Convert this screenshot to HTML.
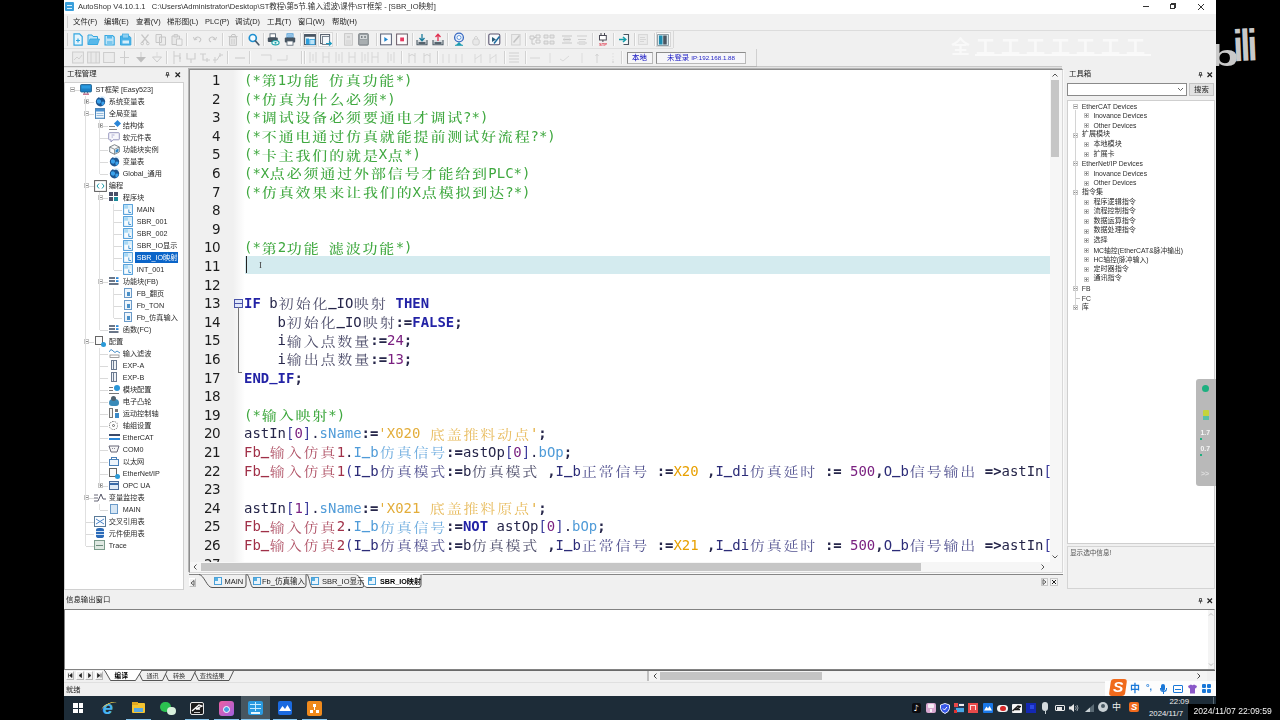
<!DOCTYPE html><html lang="zh-CN"><head><meta charset="utf-8"><title>AutoShop</title><style>
*{box-sizing:border-box;margin:0;padding:0}
html,body{width:1280px;height:720px;overflow:hidden;background:#000}
body{position:relative;font-family:"Liberation Sans","Noto Sans CJK SC",sans-serif;font-size:7.5px;color:#222}
.a{position:absolute}
.t{position:absolute;white-space:nowrap;line-height:1}
#app{filter:blur(.35px);position:absolute;left:64px;top:0;width:1152px;height:696px;background:#f0f0f0;overflow:hidden}
#title{left:0;top:0;width:1152px;height:14px;background:#fff}
#menu{left:0;top:14px;width:1152px;height:16px;background:#f2f2f2}
.ln{position:absolute;left:0;width:30px;text-align:right;font-family:"DejaVu Sans","Liberation Sans",sans-serif;font-size:13.5px;line-height:18.6px;height:18.6px;color:#1c1c1c;letter-spacing:-0.6px}
.cl{position:absolute;left:54px;white-space:pre;font-family:"DejaVu Sans Mono","Liberation Mono",monospace;font-size:13.95px;line-height:18.6px;height:18.6px;color:#26264a}
.cl i{display:inline-block;vertical-align:top;font-style:normal;font-family:"Noto Serif CJK SC",serif;font-size:13px;letter-spacing:1.66px;font-weight:400;transform:scaleX(1.15);transform-origin:0 50%;text-indent:.7px;opacity:.82;position:relative;top:.2px;height:18.6px;line-height:18.6px;overflow:visible}
.cm i{opacity:1;font-weight:500}
.cl b{font-weight:bold;position:relative;top:-2px}
.cm{color:#3fa83f}
.kw{color:#2323a6;font-weight:bold}
.nu{color:#7a2080}
.st{color:#e3ad3a}
.fb{color:#a03048}
.mb{color:#4f9bd8}
.pa{color:#2c2c78}
.br{color:#3c3c9c}
.op{color:#26264a;font-weight:bold}
.xx{color:#e8a000}
.tr{position:absolute;white-space:nowrap;font-size:7.2px;line-height:12px;height:12px;color:#2a2a2a}
</style></head><body><div id="app"><div id="title" class="a"></div><div class="a" style="left:1px;top:2px;width:9px;height:9px;background:#3aa0dc;border-radius:1px"></div><div class="a" style="left:3px;top:5px;width:5px;height:1px;background:#d8f0ff"></div><div class="a" style="left:3px;top:8px;width:5px;height:1px;background:#d8f0ff"></div><div class="t" style="left:14px;top:3px;font-size:7.55px;color:#303030">AutoShop V4.10.1.1&nbsp;&nbsp; C:\Users\Administrator\Desktop\ST教程\第5节.输入滤波\课件\ST框架 - [SBR_IO映射]</div><div class="a" style="left:1079px;top:6px;width:6px;height:1px;background:#333"></div><div class="a" style="left:1106px;top:4px;width:5px;height:5px;border:1px solid #333"></div><div class="a" style="left:1107px;top:3px;width:5px;height:1px;background:#333"></div><div class="a" style="left:1111px;top:3px;width:1px;height:5px;background:#333"></div><svg class="a" style="left:1133px;top:3px" width="8" height="8"><path d="M1 1L7 7M7 1L1 7" stroke="#333" stroke-width="1"/></svg><div id="menu" class="a"></div><div class="t" style="left:9px;top:18px;font-size:7.4px;color:#1e1e1e">文件(F)</div><div class="t" style="left:40px;top:18px;font-size:7.4px;color:#1e1e1e">编辑(E)</div><div class="t" style="left:72px;top:18px;font-size:7.4px;color:#1e1e1e">查看(V)</div><div class="t" style="left:103px;top:18px;font-size:7.4px;color:#1e1e1e">梯形图(L)</div><div class="t" style="left:141px;top:18px;font-size:7.4px;color:#1e1e1e">PLC(P)</div><div class="t" style="left:171px;top:18px;font-size:7.4px;color:#1e1e1e">调试(D)</div><div class="t" style="left:203px;top:18px;font-size:7.4px;color:#1e1e1e">工具(T)</div><div class="t" style="left:234px;top:18px;font-size:7.4px;color:#1e1e1e">窗口(W)</div><div class="t" style="left:268px;top:18px;font-size:7.4px;color:#1e1e1e">帮助(H)</div><div class="a" style="left:3px;top:16px;width:1px;height:12px;background:#cfcfcf"></div><div class="a" style="left:0;top:30px;width:1152px;height:1px;background:#dcdcdc"></div><div class="a" style="left:0;top:48px;width:609px;height:1px;background:#dedede"></div><div class="a" style="left:0;top:66px;width:998px;height:1px;background:#c8c8c8"></div><div class="a" style="left:0;top:67px;width:998px;height:1px;background:#e2e2e2"></div><div class="a" style="left:3px;top:33px;width:1px;height:13px;background:#cfcfcf"></div><svg class="a" style="left:9.0px;top:33.0px" width="10" height="13" viewBox="0 0 10 13"><path d="M1 .8H6.500L9.200 3.500V12.200H1Z" fill="#e6f5fd" stroke="#35a7e0" stroke-width="1.200"/><path d="M3 7.500H7M5 5.500V9.500" stroke="#35a7e0" stroke-width="1.200"/></svg><svg class="a" style="left:23.0px;top:33.0px" width="13" height="13" viewBox="0 0 13 13"><path d="M1 2H5L6 3.500H10.500V11.500H1Z" fill="#bfe4f7" stroke="#35a7e0" stroke-width="1"/><path d="M1 11.500L3 6H12.500L10.500 11.500Z" fill="#58b8ea" stroke="#35a7e0" stroke-width=".8"/></svg><svg class="a" style="left:40.0px;top:33.0px" width="11" height="13" viewBox="0 0 11 13"><path d="M1 2.500H8.500L10.200 4V12H1Z" fill="#bfe4f7" stroke="#35a7e0" stroke-width="1.100"/><rect x="3" y="2.500" width="5" height="3" fill="#58b8ea"/><rect x="3" y="8" width="5.500" height="4" fill="#7cc8ee"/></svg><svg class="a" style="left:55.0px;top:33.0px" width="13" height="13" viewBox="0 0 13 13"><path d="M1.500 3H10L11.800 4.500V12H1.500Z" fill="#4cb2e8" stroke="#35a7e0" stroke-width="1"/><rect x="3.500" y="1" width="6" height="4" fill="#8fd0f2" stroke="#35a7e0" stroke-width=".7"/><rect x="3.500" y="7.500" width="6.500" height="3" fill="#d6effb"/></svg><div class="a" style="left:70.0px;top:33px;width:1px;height:13px;background:#d2d2d2"></div><div class="a" style="left:71.0px;top:33px;width:1px;height:13px;background:#fafafa"></div><svg class="a" style="left:76.0px;top:33.0px" width="10" height="13" viewBox="0 0 10 13"><path d="M1.500 1.500L8 9.500M8.500 1.500L2 9.500" stroke="#c6c6c6" stroke-width="1.200" fill="none"/><circle cx="2.200" cy="10.500" r="1.300" fill="none" stroke="#c6c6c6"/><circle cx="7.800" cy="10.500" r="1.300" fill="none" stroke="#c6c6c6"/></svg><svg class="a" style="left:91.0px;top:33.0px" width="12" height="13" viewBox="0 0 12 13"><path d="M1 1.500H6.500V9.500H1Z M4.500 4H10.500V12H4.500Z" fill="#ececec" stroke="#c6c6c6" stroke-width="1"/></svg><svg class="a" style="left:106.5px;top:33.0px" width="12" height="13" viewBox="0 0 12 13"><path d="M1 3H8.500V11.500H1Z" fill="#e8e8e8" stroke="#c6c6c6"/><path d="M3 1.500H6.500V4H3Z" fill="#ddd" stroke="#c6c6c6" stroke-width=".8"/><path d="M5.500 6H11V12.300H5.500Z" fill="#f2f2f2" stroke="#c6c6c6" stroke-width=".9"/></svg><div class="a" style="left:121.5px;top:33px;width:1px;height:13px;background:#d2d2d2"></div><div class="a" style="left:122.5px;top:33px;width:1px;height:13px;background:#fafafa"></div><svg class="a" style="left:129.0px;top:35.0px" width="9" height="8" viewBox="0 0 9 8"><path d="M1.500 4.500Q4.500 0 7.500 3.500Q8.500 6 6 7" fill="none" stroke="#c6c6c6" stroke-width="1.100"/><path d="M.5 2L1.500 5L4.200 4" fill="none" stroke="#c6c6c6" stroke-width="1"/></svg><svg class="a" style="left:144.0px;top:35.0px" width="9" height="8" viewBox="0 0 9 8"><path d="M7.500 4.500Q4.500 0 1.500 3.500Q.5 6 3 7" fill="none" stroke="#c6c6c6" stroke-width="1.100"/><path d="M8.500 2L7.500 5L4.800 4" fill="none" stroke="#c6c6c6" stroke-width="1"/></svg><div class="a" style="left:158.0px;top:33px;width:1px;height:13px;background:#d2d2d2"></div><div class="a" style="left:159.0px;top:33px;width:1px;height:13px;background:#fafafa"></div><svg class="a" style="left:164.0px;top:33.0px" width="10" height="13" viewBox="0 0 10 13"><path d="M1.500 4H8.500V12.300H1.500Z" fill="#e6e6e6" stroke="#c6c6c6"/><path d="M.5 3.500H9.500M3 3.500L4 1.500H7L7.500 3.500" stroke="#c6c6c6" fill="none"/><path d="M3.800 6V11M6.200 6V11" stroke="#c6c6c6" stroke-width=".8"/></svg><div class="a" style="left:178.0px;top:33px;width:1px;height:13px;background:#d2d2d2"></div><div class="a" style="left:179.0px;top:33px;width:1px;height:13px;background:#fafafa"></div><svg class="a" style="left:184.0px;top:33.0px" width="12" height="13" viewBox="0 0 12 13"><circle cx="4.800" cy="5" r="3.500" fill="#f4fbff" stroke="#1f8fd0" stroke-width="1.700"/><path d="M7.500 8L10.800 11.800" stroke="#46586a" stroke-width="1.700" stroke-linecap="round"/></svg><div class="a" style="left:199.0px;top:33px;width:1px;height:13px;background:#d2d2d2"></div><div class="a" style="left:200.0px;top:33px;width:1px;height:13px;background:#fafafa"></div><svg class="a" style="left:203.0px;top:33.0px" width="13" height="13" viewBox="0 0 13 13"><rect x="3" y=".8" width="5.500" height="4" fill="#fff" stroke="#596673" stroke-width=".9"/><rect x=".8" y="4.500" width="10" height="4.500" rx="1" fill="#46535f"/><ellipse cx="8.500" cy="9.700" rx="3.600" ry="2.200" fill="#eafaf8" stroke="#1ca0a8" stroke-width="1.100"/><circle cx="8.500" cy="9.700" r="1" fill="#1ca0a8"/></svg><svg class="a" style="left:219.5px;top:33.0px" width="12" height="13" viewBox="0 0 12 13"><rect x="3" y=".8" width="6" height="4" fill="#dbeffb" stroke="#3a90d0" stroke-width=".9"/><path d="M5 1.500V4M7 1.500V4" stroke="#2a80c8" stroke-width=".9"/><rect x=".8" y="4.500" width="10.400" height="5" rx="1" fill="#46535f"/><rect x="3" y="8" width="6" height="4.200" fill="#fff" stroke="#596673" stroke-width=".8"/></svg><div class="a" style="left:235.5px;top:33px;width:1px;height:13px;background:#d2d2d2"></div><div class="a" style="left:236.5px;top:33px;width:1px;height:13px;background:#fafafa"></div><div class="a" style="left:238.500px;top:32px;width:14px;height:15px;background:#fafafa;border:1px solid #dadada"></div><svg class="a" style="left:240.0px;top:34.0px" width="12" height="12" viewBox="0 0 12 12"><rect x=".6" y=".6" width="10.800" height="10" fill="#eef7fc" stroke="#4a5663" stroke-width="1.100"/><rect x=".6" y=".6" width="10.800" height="2.200" fill="#4a5663"/><rect x="2" y="4.500" width="3" height="6" fill="#2f9fdc"/><rect x="5.800" y="5.500" width="5" height="5" fill="#bfe4f7" stroke="#2f9fdc" stroke-width=".8"/></svg><div class="a" style="left:254px;top:32px;width:15px;height:15px;background:#fafafa;border:1px solid #dadada"></div><svg class="a" style="left:255.5px;top:34.0px" width="12" height="12" viewBox="0 0 12 12"><rect x=".6" y=".6" width="9" height="9" fill="#fff" stroke="#4a5663" stroke-width="1"/><rect x="2.500" y="2.500" width="7" height="8" fill="#f4f8fb" stroke="#6a7885" stroke-width=".9"/><path d="M6 9.500H11M9 7.500L11.300 9.500L9 11.500" stroke="#1c9cc0" stroke-width="1.200" fill="none"/></svg><div class="a" style="left:272.0px;top:33px;width:1px;height:13px;background:#d2d2d2"></div><div class="a" style="left:273.0px;top:33px;width:1px;height:13px;background:#fafafa"></div><svg class="a" style="left:280.0px;top:33.0px" width="9" height="13" viewBox="0 0 9 13"><rect x=".6" y=".6" width="7.800" height="11.600" fill="#e4e4e4" stroke="#c6c6c6" stroke-width=".9"/><path d="M2 8H7M2 10H7" stroke="#cfcfcf" stroke-width=".8"/><rect x="3" y="3" width="3" height="2" fill="#d0d0d0"/></svg><svg class="a" style="left:294.0px;top:33.0px" width="11" height="13" viewBox="0 0 11 13"><rect x=".6" y=".6" width="9.800" height="11.600" rx="1" fill="#9aa0a4" stroke="#80868a" stroke-width=".9"/><rect x="2" y="2" width="7" height="4" fill="#d4d8da"/><rect x="3" y="3" width="1.500" height="2" fill="#7a8084"/><rect x="6.300" y="3" width="1.500" height="2" fill="#7a8084"/><path d="M1.500 8H9.500M1.500 10H9.500" stroke="#c4c8ca" stroke-width=".7"/></svg><div class="a" style="left:311.5px;top:33px;width:1px;height:13px;background:#d2d2d2"></div><div class="a" style="left:312.5px;top:33px;width:1px;height:13px;background:#fafafa"></div><svg class="a" style="left:316.0px;top:33.0px" width="12" height="13" viewBox="0 0 12 13"><rect x=".6" y="1" width="10.800" height="10.800" fill="#fcfcfe" stroke="#565e74" stroke-width="1"/><path d="M4.300 4L8 6.400L4.300 8.800Z" fill="#1e86d0"/></svg><svg class="a" style="left:331.5px;top:33.0px" width="12" height="13" viewBox="0 0 12 13"><rect x=".6" y="1" width="10.800" height="10.800" fill="#fdfbfc" stroke="#6a5a66" stroke-width="1"/><rect x="4.200" y="4.500" width="3.800" height="3.800" fill="#e83a60"/></svg><div class="a" style="left:348.0px;top:33px;width:1px;height:13px;background:#d2d2d2"></div><div class="a" style="left:349.0px;top:33px;width:1px;height:13px;background:#fafafa"></div><svg class="a" style="left:352.0px;top:33.0px" width="12" height="13" viewBox="0 0 12 13"><path d="M1 7V11.800H11V7" fill="#d8dde0" stroke="#4c5a64" stroke-width="1.100"/><rect x="2.500" y="9" width="7" height="2" fill="#56646e"/><path d="M6 1V7.500M3.500 5L6 7.800L8.500 5" stroke="#1c7c9c" stroke-width="1.300" fill="none"/></svg><svg class="a" style="left:368.0px;top:33.0px" width="12" height="13" viewBox="0 0 12 13"><path d="M1 7V11.800H11V7" fill="#d8dde0" stroke="#4c5a64" stroke-width="1.100"/><rect x="2.500" y="9" width="7" height="2" fill="#56646e"/><path d="M6 8V1.500M3.500 4L6 1.200L8.500 4" stroke="#e03050" stroke-width="1.300" fill="none"/></svg><div class="a" style="left:383.0px;top:33px;width:1px;height:13px;background:#d2d2d2"></div><div class="a" style="left:384.0px;top:33px;width:1px;height:13px;background:#fafafa"></div><svg class="a" style="left:388.5px;top:32.0px" width="12" height="14" viewBox="0 0 12 14"><circle cx="6" cy="5.500" r="4.400" fill="#e8f0fb" stroke="#3868c0" stroke-width="1.300"/><circle cx="6" cy="5.500" r="2" fill="#fff" stroke="#5890d8" stroke-width=".9"/><path d="M3 13L6 10L9 13Z" fill="#1c9cb0"/><path d="M2 13.300H10" stroke="#1c9cb0" stroke-width="1"/></svg><svg class="a" style="left:408.0px;top:35.0px" width="8" height="11" viewBox="0 0 8 11"><rect x=".8" y="4" width="6.400" height="6" rx="2" fill="#e8e8e8" stroke="#d0d0d0"/><path d="M2.500 4V2.500Q4 0 5.500 2.500V4" fill="none" stroke="#d0d0d0"/></svg><div class="a" style="left:420.5px;top:33px;width:1px;height:13px;background:#d2d2d2"></div><div class="a" style="left:421.5px;top:33px;width:1px;height:13px;background:#fafafa"></div><svg class="a" style="left:424.0px;top:33.0px" width="13" height="13" viewBox="0 0 13 13"><rect x=".8" y="1" width="11" height="10.800" rx="1.500" fill="#f8fafc" stroke="#5a5470" stroke-width="1.100"/><path d="M4 4L8 6.500L4 9Z" fill="#285a78"/><path d="M6 10.500L11.500 3.500" stroke="#1c6ca0" stroke-width="1.500"/></svg><div class="a" style="left:440.5px;top:33px;width:1px;height:13px;background:#d2d2d2"></div><div class="a" style="left:441.5px;top:33px;width:1px;height:13px;background:#fafafa"></div><svg class="a" style="left:446.5px;top:33.0px" width="10" height="13" viewBox="0 0 10 13"><rect x=".6" y="1.500" width="8.500" height="10.500" fill="#ececec" stroke="#d2d2d2"/><path d="M2.500 9.500L8.500 2.500" stroke="#c2c2c2" stroke-width="1.500"/></svg><div class="a" style="left:460.5px;top:33px;width:1px;height:13px;background:#d2d2d2"></div><div class="a" style="left:461.5px;top:33px;width:1px;height:13px;background:#fafafa"></div><svg class="a" style="left:465.0px;top:33.0px" width="12" height="13" viewBox="0 0 12 13"><path d="M1 3H5V6H1ZM7 2H11V5H7ZM7 7H11V10H7ZM3 6V11H6M5 4.500H7" fill="none" stroke="#c6c6c6" stroke-width="1"/></svg><svg class="a" style="left:479.0px;top:33.0px" width="12" height="13" viewBox="0 0 12 13"><path d="M1 2H5V5H1ZM7 2H11V5H7ZM1 8H5V11H1ZM7 8H11V11H7Z" fill="#e6e6e6" stroke="#c6c6c6" stroke-width=".9"/></svg><svg class="a" style="left:497.0px;top:33.0px" width="12" height="13" viewBox="0 0 12 13"><path d="M1 3H11M2 6.500H10M1 10H11" stroke="#c6c6c6" stroke-width="1.200"/><path d="M3 5H9V8H3Z" fill="none" stroke="#d4d4d4" stroke-width=".8"/></svg><svg class="a" style="left:512.0px;top:33.0px" width="12" height="13" viewBox="0 0 12 13"><path d="M1 3H11M2 6.500H10M1 10H11" stroke="#cecece" stroke-width="1.200"/><path d="M3 8.500H9V11.500H3Z" fill="none" stroke="#d8d8d8" stroke-width=".8"/></svg><div class="a" style="left:527.5px;top:33px;width:1px;height:13px;background:#d2d2d2"></div><div class="a" style="left:528.5px;top:33px;width:1px;height:13px;background:#fafafa"></div><svg class="a" style="left:533.0px;top:32.0px" width="12" height="15" viewBox="0 0 12 15"><path d="M4 1V3.500M7.500 1V3.500" stroke="#4a4a55" stroke-width="1"/><rect x="2.500" y="3.500" width="6.800" height="4.500" fill="#fff" stroke="#4a4a55" stroke-width="1"/><path d="M5.900 8V10" stroke="#4a4a55" stroke-width="1"/><text x="6" y="14" font-size="4.200" font-family="Liberation Sans,sans-serif" font-weight="bold" fill="#e03c50" text-anchor="middle">STP</text></svg><div class="a" style="left:548.5px;top:33px;width:1px;height:13px;background:#d2d2d2"></div><div class="a" style="left:549.5px;top:33px;width:1px;height:13px;background:#fafafa"></div><svg class="a" style="left:554.0px;top:33.0px" width="12" height="13" viewBox="0 0 12 13"><path d="M5.500 1.500H10.500V11.500H5.500" fill="#f6f8fa" stroke="#4a5560" stroke-width="1.100"/><path d="M1 6.500H7.500M5 4L7.800 6.500L5 9" stroke="#149ca8" stroke-width="1.500" fill="none"/></svg><div class="a" style="left:569.5px;top:33px;width:1px;height:13px;background:#d2d2d2"></div><div class="a" style="left:570.5px;top:33px;width:1px;height:13px;background:#fafafa"></div><svg class="a" style="left:574.0px;top:34.0px" width="10" height="11" viewBox="0 0 10 11"><rect x=".6" y=".6" width="8.800" height="9.800" fill="#ececec" stroke="#d6d6d6"/><path d="M2 3.500H7M2 5.500H8M2 7.500H6" stroke="#d0d0d0" stroke-width=".8"/></svg><div class="a" style="left:589.5px;top:33px;width:1px;height:13px;background:#d2d2d2"></div><div class="a" style="left:590.5px;top:33px;width:1px;height:13px;background:#fafafa"></div><div class="a" style="left:591.500px;top:32px;width:15px;height:15px;background:#fbfbfb;border:1px solid #d6d6d6"></div><svg class="a" style="left:593.0px;top:33.5px" width="12" height="12" viewBox="0 0 12 12"><rect x=".6" y=".6" width="10.800" height="10.800" fill="#d6e8ee" stroke="#7a8a94" stroke-width=".8"/><rect x="2" y="1.500" width="3.500" height="9" fill="#1c8cb0"/><rect x="6.200" y="1.500" width="3.500" height="9" fill="#4a5560"/></svg><div class="a" style="left:608.500px;top:31px;width:1px;height:17px;background:#d8d8d8"></div><svg class="a" style="left:8.0px;top:51.0px" width="12" height="13" viewBox="0 0 12 13"><rect x=".6" y="1" width="10.800" height="11" fill="#ebebeb" stroke="#cdcdcd"/><path d="M2 9L5 6L7 8L10 4" stroke="#cdcdcd" fill="none" stroke-width=".9"/></svg><svg class="a" style="left:23.0px;top:51.0px" width="13" height="13" viewBox="0 0 13 13"><rect x=".6" y="1" width="11.800" height="11" fill="#e9e9e9" stroke="#cdcdcd"/><path d="M4 1V12M9 1V12" stroke="#cdcdcd" stroke-width=".9"/></svg><svg class="a" style="left:39.0px;top:51.0px" width="12" height="13" viewBox="0 0 12 13"><rect x=".6" y="1.500" width="10.800" height="10" fill="#ececec" stroke="#cdcdcd"/></svg><svg class="a" style="left:55.0px;top:51.0px" width="11" height="13" viewBox="0 0 11 13"><path d="M5.500 0V13M1 6.500H10" stroke="#cdcdcd" stroke-width="1"/></svg><svg class="a" style="left:71.0px;top:51.0px" width="12" height="13" viewBox="0 0 12 13"><path d="M1 6H11L6 11.500Z" fill="#bdbdbd"/><path d="M6 1V6" stroke="#cdcdcd"/></svg><svg class="a" style="left:87.0px;top:51.0px" width="12" height="13" viewBox="0 0 12 13"><path d="M1.500 6H10.500L6 11Z" fill="none" stroke="#cdcdcd" stroke-width="1"/><path d="M6 1V6" stroke="#dcdcdc"/></svg><div class="a" style="left:101.5px;top:51px;width:1px;height:13px;background:#d2d2d2"></div><div class="a" style="left:102.5px;top:51px;width:1px;height:13px;background:#fafafa"></div><svg class="a" style="left:107.0px;top:51.0px" width="13" height="13" viewBox="0 0 13 13"><path d="M3 0V13M9 2V11M3 5H9" stroke="#cdcdcd" stroke-width="1"/><circle cx="9" cy="7" r="1" fill="#cdcdcd"/></svg><svg class="a" style="left:121.0px;top:51.0px" width="13" height="13" viewBox="0 0 13 13"><path d="M2 2V8H10V2M6 8V12" stroke="#cdcdcd" stroke-width="1.100" fill="none"/></svg><svg class="a" style="left:134.0px;top:51.0px" width="13" height="13" viewBox="0 0 13 13"><path d="M2 3H8M5 3V9H12M9 7V11" stroke="#cdcdcd" stroke-width="1.100" fill="none"/></svg><svg class="a" style="left:147.0px;top:51.0px" width="13" height="13" viewBox="0 0 13 13"><path d="M2 9H6L9 4H12M4 6V12M9 2V6" stroke="#cdcdcd" stroke-width="1" fill="none"/></svg><div class="a" style="left:163.0px;top:51px;width:1px;height:13px;background:#d2d2d2"></div><div class="a" style="left:164.0px;top:51px;width:1px;height:13px;background:#fafafa"></div><svg class="a" style="left:170.0px;top:51.0px" width="12" height="13" viewBox="0 0 12 13"><path d="M1 7H11" stroke="#cdcdcd" stroke-width="1.100"/></svg><div class="a" style="left:185.0px;top:51px;width:1px;height:13px;background:#d2d2d2"></div><div class="a" style="left:186.0px;top:51px;width:1px;height:13px;background:#fafafa"></div><svg class="a" style="left:196.0px;top:51.0px" width="13" height="13" viewBox="0 0 13 13"><path d="M1 4H11V9.500" stroke="#d4d4d4" stroke-width="1" fill="none"/></svg><svg class="a" style="left:212.0px;top:51.0px" width="13" height="13" viewBox="0 0 13 13"><path d="M1 9H11V4" stroke="#d4d4d4" stroke-width="1" fill="none"/></svg><div class="a" style="left:236.5px;top:51px;width:1px;height:13px;background:#d2d2d2"></div><div class="a" style="left:237.5px;top:51px;width:1px;height:13px;background:#fafafa"></div><div class="a" style="left:239.5px;top:51px;width:1px;height:13px;background:#d2d2d2"></div><div class="a" style="left:240.5px;top:51px;width:1px;height:13px;background:#fafafa"></div><svg class="a" style="left:244.0px;top:51.0px" width="11" height="13" viewBox="0 0 11 13"><path d="M2 1V12M8 1V12 M5 3V10" stroke="#d6d6d6" stroke-width="1" fill="none"/></svg><svg class="a" style="left:257.0px;top:51.0px" width="11" height="13" viewBox="0 0 11 13"><path d="M2 1V12M8 1V12 M2 6H8" stroke="#d6d6d6" stroke-width="1" fill="none"/></svg><svg class="a" style="left:270.0px;top:51.0px" width="11" height="13" viewBox="0 0 11 13"><path d="M2 1V12M8 1V12 M5 3V10" stroke="#d6d6d6" stroke-width="1" fill="none"/></svg><svg class="a" style="left:283.0px;top:51.0px" width="11" height="13" viewBox="0 0 11 13"><path d="M2 1V12M8 1V12 M2 6H8" stroke="#d6d6d6" stroke-width="1" fill="none"/></svg><svg class="a" style="left:296.0px;top:51.0px" width="11" height="13" viewBox="0 0 11 13"><path d="M2 1V12M8 1V12 M5 3V10" stroke="#d6d6d6" stroke-width="1" fill="none"/></svg><svg class="a" style="left:306.0px;top:51.0px" width="11" height="13" viewBox="0 0 11 13"><path d="M2 1V12M8 1V12 M2 6H8" stroke="#d6d6d6" stroke-width="1" fill="none"/></svg><svg class="a" style="left:322.0px;top:51.0px" width="11" height="13" viewBox="0 0 11 13"><path d="M2 1V12M8 1V12 M5 3V10" stroke="#d6d6d6" stroke-width="1" fill="none"/></svg><div class="a" style="left:337.0px;top:51px;width:1px;height:13px;background:#d2d2d2"></div><div class="a" style="left:338.0px;top:51px;width:1px;height:13px;background:#fafafa"></div><svg class="a" style="left:343.0px;top:51.0px" width="11" height="13" viewBox="0 0 11 13"><path d="M2 2V12M8 2V12M2 5Q5 2 8 5" stroke="#d2d2d2" stroke-width="1" fill="none"/></svg><svg class="a" style="left:358.0px;top:51.0px" width="11" height="13" viewBox="0 0 11 13"><path d="M2 2V12M8 2V12M2 5Q5 2 8 5" stroke="#d2d2d2" stroke-width="1" fill="none"/></svg><div class="a" style="left:372.5px;top:51px;width:1px;height:13px;background:#d2d2d2"></div><div class="a" style="left:373.5px;top:51px;width:1px;height:13px;background:#fafafa"></div><svg class="a" style="left:377.0px;top:51.0px" width="11" height="13" viewBox="0 0 11 13"><path d="M2 3V12M8 3V12" stroke="#dadada" stroke-width="1" fill="none"/></svg><svg class="a" style="left:390.0px;top:51.0px" width="11" height="13" viewBox="0 0 11 13"><path d="M2 3V12M8 3V12" stroke="#dadada" stroke-width="1" fill="none"/></svg><svg class="a" style="left:409.0px;top:51.0px" width="11" height="13" viewBox="0 0 11 13"><path d="M2 3V12M8 3V12 M2 8L8 4" stroke="#dadada" stroke-width="1" fill="none"/></svg><svg class="a" style="left:424.0px;top:51.0px" width="11" height="13" viewBox="0 0 11 13"><path d="M2 3V12M8 3V12 M2 8L8 4" stroke="#dadada" stroke-width="1" fill="none"/></svg><div class="a" style="left:439.5px;top:51px;width:1px;height:13px;background:#d2d2d2"></div><div class="a" style="left:440.5px;top:51px;width:1px;height:13px;background:#fafafa"></div><svg class="a" style="left:444.0px;top:51.0px" width="12" height="13" viewBox="0 0 12 13"><path d="M1 2H11M1 5H11M1 8H11M1 11H11" stroke="#cfcfcf" stroke-width="1.100"/></svg><div class="a" style="left:460.5px;top:51px;width:1px;height:13px;background:#d2d2d2"></div><div class="a" style="left:461.5px;top:51px;width:1px;height:13px;background:#fafafa"></div><svg class="a" style="left:465.0px;top:51.0px" width="12" height="13" viewBox="0 0 12 13"><path d="M1 7H11" stroke="#d6d6d6" stroke-width="1"/></svg><svg class="a" style="left:483.0px;top:51.0px" width="6" height="13" viewBox="0 0 6 13"><path d="M3 2V12" stroke="#dcdcdc" stroke-width="1"/></svg><svg class="a" style="left:495.0px;top:51.0px" width="12" height="13" viewBox="0 0 12 13"><path d="M1 8L4 10L10 5" stroke="#dadada" stroke-width="1" fill="none"/></svg><svg class="a" style="left:515.0px;top:51.0px" width="6" height="13" viewBox="0 0 6 13"><path d="M3 2V12" stroke="#dcdcdc" stroke-width="1"/></svg><svg class="a" style="left:530.0px;top:51.0px" width="6" height="13" viewBox="0 0 6 13"><path d="M3 3V12M1.500 5L3 3L4.500 5" stroke="#d4d4d4" stroke-width="1" fill="none"/></svg><svg class="a" style="left:546.0px;top:51.0px" width="6" height="13" viewBox="0 0 6 13"><path d="M3 2V10" stroke="#dedede" stroke-width="1" stroke-dasharray="1.500 1.500"/><circle cx="3" cy="11" r="1" fill="#d8d8d8"/></svg><div class="a" style="left:556.5px;top:51px;width:1px;height:13px;background:#d2d2d2"></div><div class="a" style="left:557.5px;top:51px;width:1px;height:13px;background:#fafafa"></div><div class="a" style="left:562.500px;top:51.500px;width:26px;height:12px;background:#f6f6f8;border:1px solid #8c8c8c;border-right-color:#b8b8b8;border-bottom-color:#b8b8b8"></div><div class="t" style="left:568px;top:54px;font-size:7.400px;color:#1c1cc4;font-weight:500">本地</div><div class="a" style="left:592px;top:51.500px;width:90px;height:12px;background:#f6f6f8;border:1px solid #8c8c8c;border-right-color:#b8b8b8;border-bottom-color:#b8b8b8"></div><div class="t" style="left:603px;top:54px;font-size:7.400px;color:#1c1cc4">未登录 <span style="font-size:6.200px">IP:192.168.1.88</span></div><div class="a" style="left:692px;top:49px;width:1px;height:17px;background:#d0d0d0"></div><div class="a" style="left:0;top:66px;width:693px;height:1px;background:#b4b4b4"></div><div class="t" style="left:3px;top:70px;font-size:7.4px;color:#222">工程管理</div><svg class="a" style="left:101px;top:72px" width="5" height="6"><path d="M1.500 .5H3.500M1.500 .5V3H3.500V.5M.5 3.200H4.500M2.500 3.200V5.500" stroke="#333" stroke-width=".8" fill="none"/></svg><svg class="a" style="left:110px;top:71px" width="7" height="7"><path d="M1.500 1.500L6 6M6 1.500L1.500 6" stroke="#222" stroke-width="1.200"/></svg><div class="a" style="left:0;top:82px;width:120px;height:508px;background:#fff;border:1px solid #d0d0d0"></div><div class="a" style="left:8px;top:89.5px;width:8px;height:1px;background:#dadada"></div><div class="a" style="left:6px;top:87.0px;width:5px;height:5px;border:1px solid #c4c4c4;background:#fff"></div><div class="a" style="left:7px;top:89.0px;width:3px;height:1px;background:#8a8a8a"></div><svg class="a" style="left:16px;top:84px" width="12" height="11" viewBox="0 0 12 11"><rect x=".5" y=".5" width="11" height="7.500" rx="1" fill="#1c80c4" stroke="#1a5a8a" stroke-width=".8"/><rect x="1.500" y="1.500" width="9" height="3" fill="#2a9ae0"/><path d="M4.500 8V9.500M7.500 8V9.500" stroke="#3a5a7a" stroke-width=".8"/><rect x="3" y="9.500" width="6" height="1.300" fill="#b85a7a"/></svg><div class="tr" style="left:31.5px;top:83.5px;">ST框架 [Easy523]</div><div class="a" style="left:22px;top:101.5px;width:8px;height:1px;background:#dadada"></div><div class="a" style="left:20px;top:99.0px;width:5px;height:5px;border:1px solid #c4c4c4;background:#fff"></div><div class="a" style="left:21px;top:101.0px;width:3px;height:1px;background:#8a8a8a"></div><div class="a" style="left:22px;top:100.0px;width:1px;height:3px;background:#8a8a8a"></div><svg class="a" style="left:31px;top:96px" width="11" height="11" viewBox="0 0 11 11"><circle cx="5.500" cy="5.800" r="4.700" fill="#1d5692"/><path d="M2 4Q4 2.500 5.500 4T5 7.500Q3 8 2 6.500Z" fill="#3aa2ec"/><path d="M6.500 6Q8.500 5 9.500 6.500Q9 9 7 9.500Q6 8 6.500 6Z" fill="#3aa2ec"/><path d="M4.500 1.800Q8 -.5 10.300 2.500" stroke="#dff0fc" stroke-width="1.300" fill="none"/></svg><div class="tr" style="left:44.7px;top:95.5px;">系统变量表</div><div class="a" style="left:22px;top:113.5px;width:8px;height:1px;background:#dadada"></div><div class="a" style="left:20px;top:111.0px;width:5px;height:5px;border:1px solid #c4c4c4;background:#fff"></div><div class="a" style="left:21px;top:113.0px;width:3px;height:1px;background:#8a8a8a"></div><svg class="a" style="left:31px;top:108px" width="10" height="11" viewBox="0 0 10 11"><rect x=".5" y=".5" width="9" height="10" fill="#eef5fb" stroke="#4f86b8"/><rect x="1" y="1" width="8" height="2.500" fill="#4a90d0"/><path d="M1.500 5.500H8.500M1.500 7.500H8.500" stroke="#8ab4d8" stroke-width=".9"/><rect x="1" y="9" width="8" height="1.200" fill="#b8d4ec"/></svg><div class="tr" style="left:44.7px;top:107.5px;">全局变量</div><div class="a" style="left:36px;top:125.5px;width:8px;height:1px;background:#dadada"></div><div class="a" style="left:34px;top:123.0px;width:5px;height:5px;border:1px solid #c4c4c4;background:#fff"></div><div class="a" style="left:35px;top:125.0px;width:3px;height:1px;background:#8a8a8a"></div><div class="a" style="left:36px;top:124.0px;width:1px;height:3px;background:#8a8a8a"></div><div class="a" style="left:51px;top:121px;width:5px;height:5px;background:#2a86d8;transform:rotate(45deg)"></div><div class="a" style="left:45px;top:126px;width:6px;height:1px;background:#888"></div><div class="a" style="left:45px;top:129px;width:8px;height:1px;background:#888"></div><div class="tr" style="left:58.7px;top:119.5px;">结构体</div><div class="a" style="left:36px;top:137.5px;width:8px;height:1px;background:#dadada"></div><svg class="a" style="left:44px;top:132px" width="12" height="11" viewBox="0 0 12 11"><path d="M1.500 .7H10.500Q11.300 .7 11.300 1.500V7Q11.300 7.800 10.500 7.800H5L3 10V7.800H1.500Q.7 7.800 .7 7V1.500Q.7 .7 1.500 .7Z" fill="#f7f7fc" stroke="#8c8cb8" stroke-width=".9"/><path d="M3.500 3H6.500M3.500 5H5" stroke="#9a9ac4" stroke-width=".8"/></svg><div class="tr" style="left:58.7px;top:131.5px;">软元件表</div><div class="a" style="left:36px;top:149.5px;width:8px;height:1px;background:#dadada"></div><svg class="a" style="left:45px;top:144px" width="11" height="11" viewBox="0 0 11 11"><path d="M5.500 .7L10.300 3V8L5.500 10.300L.7 8V3Z" fill="#fafafa" stroke="#70787e" stroke-width=".9"/><path d="M.7 3L5.500 5.300L10.300 3M5.500 5.300V10.300" stroke="#70787e" stroke-width=".8" fill="none"/><path d="M6.500 6L9.500 4.600V7.500L6.500 9Z" fill="#2a86c8"/></svg><div class="tr" style="left:58.7px;top:143.5px;">功能块实例</div><div class="a" style="left:36px;top:161.5px;width:8px;height:1px;background:#dadada"></div><svg class="a" style="left:45px;top:156px" width="11" height="11" viewBox="0 0 11 11"><circle cx="5.500" cy="5.800" r="4.700" fill="#1d5692"/><path d="M2 4Q4 2.500 5.500 4T5 7.500Q3 8 2 6.500Z" fill="#3aa2ec"/><path d="M6.500 6Q8.500 5 9.500 6.500Q9 9 7 9.500Q6 8 6.500 6Z" fill="#3aa2ec"/><path d="M4.500 1.800Q8 -.5 10.300 2.500" stroke="#dff0fc" stroke-width="1.300" fill="none"/></svg><div class="tr" style="left:58.7px;top:155.5px;">变量表</div><div class="a" style="left:36px;top:173.5px;width:8px;height:1px;background:#dadada"></div><svg class="a" style="left:45px;top:168px" width="11" height="11" viewBox="0 0 11 11"><circle cx="5.500" cy="5.800" r="4.700" fill="#1d5692"/><path d="M2 4Q4 2.500 5.500 4T5 7.500Q3 8 2 6.500Z" fill="#3aa2ec"/><path d="M6.500 6Q8.500 5 9.500 6.500Q9 9 7 9.500Q6 8 6.500 6Z" fill="#3aa2ec"/><path d="M4.500 1.800Q8 -.5 10.300 2.500" stroke="#dff0fc" stroke-width="1.300" fill="none"/></svg><div class="tr" style="left:58.7px;top:167.5px;">Global_通用</div><div class="a" style="left:22px;top:185.5px;width:8px;height:1px;background:#dadada"></div><div class="a" style="left:20px;top:183.0px;width:5px;height:5px;border:1px solid #c4c4c4;background:#fff"></div><div class="a" style="left:21px;top:185.0px;width:3px;height:1px;background:#8a8a8a"></div><svg class="a" style="left:30px;top:180px" width="13" height="12" viewBox="0 0 13 12"><rect x=".6" y=".6" width="11.800" height="10.800" fill="#fff" stroke="#5a5a5a" stroke-width="1"/><path d="M5 3.500L3 6L5 8.500M8 3.500L10 6L8 8.500" stroke="#1a9aa8" stroke-width="1" fill="none"/></svg><div class="tr" style="left:44.7px;top:179.5px;">编程</div><div class="a" style="left:36px;top:197.5px;width:8px;height:1px;background:#dadada"></div><div class="a" style="left:34px;top:195.0px;width:5px;height:5px;border:1px solid #c4c4c4;background:#fff"></div><div class="a" style="left:35px;top:197.0px;width:3px;height:1px;background:#8a8a8a"></div><div class="a" style="left:45px;top:192px;width:4px;height:4px;background:#4a5068"></div><div class="a" style="left:50px;top:192px;width:4px;height:4px;background:#4a5068"></div><div class="a" style="left:45px;top:197px;width:4px;height:4px;background:#4a5068"></div><div class="a" style="left:50px;top:197px;width:4px;height:4px;background:#1a8a9a"></div><div class="tr" style="left:58.7px;top:191.5px;">程序块</div><div class="a" style="left:50px;top:209.5px;width:8px;height:1px;background:#dadada"></div><svg class="a" style="left:59px;top:204px" width="10" height="11" viewBox="0 0 10 11"><rect x=".6" y=".6" width="8.800" height="9.800" fill="#f6fbfe" stroke="#4a9ad8" stroke-width="1"/><rect x="1.200" y="1.200" width="3.800" height="3.500" fill="#a8d8f4"/><path d="M5.800 5.500V8.500H8" stroke="#4a9ad8" stroke-width="1" fill="none"/><rect x="5" y="1.200" width="3.800" height="3.500" fill="#d8eefa"/></svg><div class="tr" style="left:72.7px;top:203.5px;">MAIN</div><div class="a" style="left:50px;top:221.5px;width:8px;height:1px;background:#dadada"></div><svg class="a" style="left:59px;top:216px" width="10" height="11" viewBox="0 0 10 11"><rect x=".6" y=".6" width="8.800" height="9.800" fill="#f6fbfe" stroke="#4a9ad8" stroke-width="1"/><rect x="1.200" y="1.200" width="3.800" height="3.500" fill="#a8d8f4"/><path d="M5.800 5.500V8.500H8" stroke="#4a9ad8" stroke-width="1" fill="none"/><rect x="5" y="1.200" width="3.800" height="3.500" fill="#d8eefa"/></svg><div class="tr" style="left:72.7px;top:215.5px;">SBR_001</div><div class="a" style="left:50px;top:233.5px;width:8px;height:1px;background:#dadada"></div><svg class="a" style="left:59px;top:228px" width="10" height="11" viewBox="0 0 10 11"><rect x=".6" y=".6" width="8.800" height="9.800" fill="#f6fbfe" stroke="#4a9ad8" stroke-width="1"/><rect x="1.200" y="1.200" width="3.800" height="3.500" fill="#a8d8f4"/><path d="M5.800 5.500V8.500H8" stroke="#4a9ad8" stroke-width="1" fill="none"/><rect x="5" y="1.200" width="3.800" height="3.500" fill="#d8eefa"/></svg><div class="tr" style="left:72.7px;top:227.5px;">SBR_002</div><div class="a" style="left:50px;top:245.5px;width:8px;height:1px;background:#dadada"></div><svg class="a" style="left:59px;top:240px" width="10" height="11" viewBox="0 0 10 11"><rect x=".6" y=".6" width="8.800" height="9.800" fill="#f6fbfe" stroke="#4a9ad8" stroke-width="1"/><rect x="1.200" y="1.200" width="3.800" height="3.500" fill="#a8d8f4"/><path d="M5.800 5.500V8.500H8" stroke="#4a9ad8" stroke-width="1" fill="none"/><rect x="5" y="1.200" width="3.800" height="3.500" fill="#d8eefa"/></svg><div class="tr" style="left:72.7px;top:239.5px;">SBR_IO显示</div><div class="a" style="left:50px;top:257.5px;width:8px;height:1px;background:#dadada"></div><svg class="a" style="left:59px;top:252px" width="10" height="11" viewBox="0 0 10 11"><rect x=".6" y=".6" width="8.800" height="9.800" fill="#f6fbfe" stroke="#4a9ad8" stroke-width="1"/><rect x="1.200" y="1.200" width="3.800" height="3.500" fill="#a8d8f4"/><path d="M5.800 5.500V8.500H8" stroke="#4a9ad8" stroke-width="1" fill="none"/><rect x="5" y="1.200" width="3.800" height="3.500" fill="#d8eefa"/></svg><div class="a" style="left:71px;top:251.7px;width:43px;height:11.500px;background:#0a64c8"></div><div class="tr" style="left:72.7px;top:251.5px;color:#fff;">SBR_IO映射</div><div class="a" style="left:50px;top:269.5px;width:8px;height:1px;background:#dadada"></div><svg class="a" style="left:59px;top:264px" width="10" height="11" viewBox="0 0 10 11"><rect x=".6" y=".6" width="8.800" height="9.800" fill="#f6fbfe" stroke="#4a9ad8" stroke-width="1"/><rect x="1.200" y="1.200" width="3.800" height="3.500" fill="#a8d8f4"/><path d="M5.800 5.500V8.500H8" stroke="#4a9ad8" stroke-width="1" fill="none"/><rect x="5" y="1.200" width="3.800" height="3.500" fill="#d8eefa"/></svg><div class="tr" style="left:72.7px;top:263.5px;">INT_001</div><div class="a" style="left:36px;top:281.5px;width:8px;height:1px;background:#dadada"></div><div class="a" style="left:34px;top:279.0px;width:5px;height:5px;border:1px solid #c4c4c4;background:#fff"></div><div class="a" style="left:35px;top:281.0px;width:3px;height:1px;background:#8a8a8a"></div><svg class="a" style="left:45px;top:276px" width="10" height="10"><path d="M0 2H6M0 5H6M0 8H9.500" stroke="#3a4a62" stroke-width="1.600"/><rect x="7" y="1.200" width="2.500" height="1.800" fill="#2a86d8"/><rect x="7" y="4.200" width="2.500" height="1.800" fill="#2a86d8"/></svg><div class="tr" style="left:58.7px;top:275.5px;">功能块(FB)</div><div class="a" style="left:50px;top:293.5px;width:8px;height:1px;background:#dadada"></div><div class="a" style="left:60px;top:288px;width:8px;height:10px;border:1px solid #6a9ac8;background:#eef5fb"></div><div class="a" style="left:63px;top:292px;width:3px;height:4px;background:#4a90c8"></div><div class="tr" style="left:72.7px;top:287.5px;">FB_翻页</div><div class="a" style="left:50px;top:305.5px;width:8px;height:1px;background:#dadada"></div><div class="a" style="left:60px;top:300px;width:8px;height:10px;border:1px solid #6a9ac8;background:#eef5fb"></div><div class="a" style="left:63px;top:304px;width:3px;height:4px;background:#4a90c8"></div><div class="tr" style="left:72.7px;top:299.5px;">Fb_TON</div><div class="a" style="left:50px;top:317.5px;width:8px;height:1px;background:#dadada"></div><div class="a" style="left:60px;top:312px;width:8px;height:10px;border:1px solid #6a9ac8;background:#eef5fb"></div><div class="a" style="left:63px;top:316px;width:3px;height:4px;background:#4a90c8"></div><div class="tr" style="left:72.7px;top:311.5px;">Fb_仿真输入</div><div class="a" style="left:36px;top:329.5px;width:8px;height:1px;background:#dadada"></div><svg class="a" style="left:45px;top:324px" width="10" height="10"><path d="M0 2H6M0 5H6M0 8H9.500" stroke="#3a4a62" stroke-width="1.600"/><rect x="7" y="1.200" width="2.500" height="1.800" fill="#2a86d8"/><rect x="7" y="4.200" width="2.500" height="1.800" fill="#2a86d8"/></svg><div class="tr" style="left:58.7px;top:323.5px;">函数(FC)</div><div class="a" style="left:22px;top:341.5px;width:8px;height:1px;background:#dadada"></div><div class="a" style="left:20px;top:339.0px;width:5px;height:5px;border:1px solid #c4c4c4;background:#fff"></div><div class="a" style="left:21px;top:341.0px;width:3px;height:1px;background:#8a8a8a"></div><div class="a" style="left:31px;top:336px;width:8px;height:9px;border:1px solid #666;background:#fafafa"></div><div class="a" style="left:37px;top:342px;width:5px;height:5px;background:#2a9ad8;border-radius:3px"></div><div class="tr" style="left:44.7px;top:335.5px;">配置</div><div class="a" style="left:36px;top:353.5px;width:8px;height:1px;background:#dadada"></div><svg class="a" style="left:45px;top:348px" width="11" height="10"><path d="M0 4 Q2 0 4 3 T8 3 L11 5" stroke="#4a90c8" fill="none" stroke-width="1"/><rect x="1" y="7" width="9" height="2.5" fill="none" stroke="#888" stroke-width=".8"/></svg><div class="tr" style="left:58.7px;top:347.5px;">输入滤波</div><div class="a" style="left:36px;top:365.5px;width:8px;height:1px;background:#dadada"></div><div class="a" style="left:47px;top:360px;width:6px;height:10px;border:1px solid #6a7a90;background:#eef2f6"></div><div class="a" style="left:49px;top:361px;width:1px;height:8px;background:#6a7a90"></div><div class="tr" style="left:58.7px;top:359.5px;">EXP-A</div><div class="a" style="left:36px;top:377.5px;width:8px;height:1px;background:#dadada"></div><div class="a" style="left:47px;top:372px;width:6px;height:10px;border:1px solid #6a7a90;background:#eef2f6"></div><div class="a" style="left:49px;top:373px;width:1px;height:8px;background:#6a7a90"></div><div class="tr" style="left:58.7px;top:371.5px;">EXP-B</div><div class="a" style="left:36px;top:389.5px;width:8px;height:1px;background:#dadada"></div><div class="a" style="left:50px;top:385px;width:6px;height:6px;background:#2a96d8;border-radius:3px"></div><div class="a" style="left:45px;top:393px;width:10px;height:1px;background:#777"></div><div class="a" style="left:45px;top:387px;width:4px;height:1px;background:#777"></div><div class="a" style="left:45px;top:390px;width:4px;height:1px;background:#777"></div><div class="tr" style="left:58.7px;top:383.5px;">模块配置</div><div class="a" style="left:36px;top:401.5px;width:8px;height:1px;background:#dadada"></div><div class="a" style="left:45px;top:399px;width:10px;height:7px;background:#3a8ab8;border-radius:4px 4px 3px 3px"></div><div class="a" style="left:47px;top:396px;width:5px;height:5px;background:#50626e;border-radius:3px"></div><div class="tr" style="left:58.7px;top:395.5px;">电子凸轮</div><div class="a" style="left:36px;top:413.5px;width:8px;height:1px;background:#dadada"></div><div class="a" style="left:45px;top:408px;width:4px;height:10px;border:1px solid #777;background:#f4f4f4"></div><div class="a" style="left:51px;top:413px;width:4px;height:5px;background:#3a8ac8"></div><div class="a" style="left:51px;top:409px;width:3px;height:3px;background:#777"></div><div class="tr" style="left:58.7px;top:407.5px;">运动控制轴</div><div class="a" style="left:36px;top:425.5px;width:8px;height:1px;background:#dadada"></div><div class="a" style="left:45px;top:421px;width:9px;height:9px;border:1.5px dotted #666;border-radius:5px"></div><div class="a" style="left:48px;top:424px;width:3px;height:3px;border:1px solid #666;border-radius:2px"></div><div class="tr" style="left:58.7px;top:419.5px;">轴组设置</div><div class="a" style="left:36px;top:437.5px;width:8px;height:1px;background:#dadada"></div><div class="a" style="left:45px;top:434px;width:11px;height:2px;background:#3a4a6a"></div><div class="a" style="left:45px;top:438px;width:11px;height:2px;background:#2a86d8"></div><div class="tr" style="left:58.7px;top:431.5px;">EtherCAT</div><div class="a" style="left:36px;top:449.5px;width:8px;height:1px;background:#dadada"></div><svg class="a" style="left:44px;top:444px" width="12" height="10"><path d="M1 2H11L9 8H3Z" fill="#f6f6f6" stroke="#667" stroke-width="1"/><path d="M4 4.5H8" stroke="#889" stroke-width="1" stroke-dasharray="1 1"/></svg><div class="tr" style="left:58.7px;top:443.5px;">COM0</div><div class="a" style="left:36px;top:461.5px;width:8px;height:1px;background:#dadada"></div><div class="a" style="left:45px;top:459px;width:10px;height:7px;border:1px solid #4a80b8;background:#eef4fa"></div><div class="a" style="left:47px;top:457px;width:6px;height:3px;border:1px solid #4a80b8;border-bottom:none"></div><div class="tr" style="left:58.7px;top:455.5px;">以太网</div><div class="a" style="left:36px;top:473.5px;width:8px;height:1px;background:#dadada"></div><div class="a" style="left:45px;top:468px;width:8px;height:9px;border:1px solid #666;background:#fafafa"></div><div class="a" style="left:51px;top:474px;width:5px;height:5px;background:#2a9ad8;border-radius:3px"></div><div class="tr" style="left:58.7px;top:467.5px;">EtherNet/IP</div><div class="a" style="left:36px;top:485.5px;width:8px;height:1px;background:#dadada"></div><div class="a" style="left:34px;top:483.0px;width:5px;height:5px;border:1px solid #c4c4c4;background:#fff"></div><div class="a" style="left:35px;top:485.0px;width:3px;height:1px;background:#8a8a8a"></div><div class="a" style="left:36px;top:484.0px;width:1px;height:3px;background:#8a8a8a"></div><div class="a" style="left:45px;top:481px;width:10px;height:9px;border:1px solid #4a6a98;background:#dfeaf6"></div><div class="a" style="left:46px;top:483px;width:8px;height:2px;background:#3a6aa8"></div><div class="tr" style="left:58.7px;top:479.5px;">OPC UA</div><div class="a" style="left:22px;top:497.5px;width:8px;height:1px;background:#dadada"></div><div class="a" style="left:20px;top:495.0px;width:5px;height:5px;border:1px solid #c4c4c4;background:#fff"></div><div class="a" style="left:21px;top:497.0px;width:3px;height:1px;background:#8a8a8a"></div><svg class="a" style="left:30px;top:492px" width="12" height="10"><path d="M0 3H4M0 6H4M0 9H4" stroke="#667" stroke-width="1"/><path d="M4 9L7 2L9 7H12" stroke="#556" fill="none" stroke-width="1"/></svg><div class="tr" style="left:44.7px;top:491.5px;">变量监控表</div><div class="a" style="left:36px;top:509.5px;width:8px;height:1px;background:#dadada"></div><div class="a" style="left:46px;top:504px;width:8px;height:10px;border:1px solid #6a9ac8;background:#d6e6f4"></div><div class="tr" style="left:58.7px;top:503.5px;">MAIN</div><div class="a" style="left:22px;top:521.5px;width:8px;height:1px;background:#dadada"></div><svg class="a" style="left:30px;top:516px" width="12" height="11"><rect x=".5" y=".5" width="11" height="10" fill="#fafcff" stroke="#5a7a98"/><path d="M2 3L10 8M2 8L10 3" stroke="#4a86c8" stroke-width="1"/></svg><div class="tr" style="left:44.7px;top:515.5px;">交叉引用表</div><div class="a" style="left:22px;top:533.5px;width:8px;height:1px;background:#dadada"></div><div class="a" style="left:32px;top:528px;width:8px;height:10px;background:#2a6ab8;border-radius:3px/2px"></div><div class="a" style="left:32px;top:531px;width:8px;height:1px;background:#cfe0f4"></div><div class="a" style="left:32px;top:534px;width:8px;height:1px;background:#cfe0f4"></div><div class="tr" style="left:44.7px;top:527.5px;">元件使用表</div><div class="a" style="left:22px;top:545.5px;width:8px;height:1px;background:#dadada"></div><div class="a" style="left:30px;top:540px;width:11px;height:10px;border:1px solid #7a9a8a;background:#dfe8e2"></div><div class="a" style="left:32px;top:545px;width:7px;height:1px;background:#6a8a7a"></div><div class="tr" style="left:44.7px;top:539.5px;">Trace</div><div class="a" style="left:21px;top:95.5px;width:1px;height:450.0px;background:#e0e0e0"></div><div class="a" style="left:35px;top:119.5px;width:1px;height:54.0px;background:#e0e0e0"></div><div class="a" style="left:35px;top:191.5px;width:1px;height:138.0px;background:#e0e0e0"></div><div class="a" style="left:49px;top:203.5px;width:1px;height:66.0px;background:#e0e0e0"></div><div class="a" style="left:49px;top:287.5px;width:1px;height:30.0px;background:#e0e0e0"></div><div class="a" style="left:35px;top:347.5px;width:1px;height:138.0px;background:#e0e0e0"></div><div class="a" style="left:35px;top:503.5px;width:1px;height:6.0px;background:#e0e0e0"></div><div class="a" style="left:125px;top:69px;width:874px;height:504px;background:#fff;border:1px solid #8c8c8c;border-right-color:#d8d8d8;border-bottom-color:#d8d8d8;overflow:hidden;box-shadow:-1px -1px 0 #b4b4b4,1px 1px 0 #fafafa" id="ed"><div class="a" style="left:0;top:0;width:43px;height:100%;background:#f0f0f0"></div><div class="a" style="left:43px;top:0;width:12px;height:100%;background:linear-gradient(90deg,#f0f0f0,#fff)"></div><div class="a" style="left:55px;top:185.7px;width:805px;height:18px;background:#d4ebef"></div><div class="a" style="left:56px;top:186.2px;width:1px;height:17px;background:#222"></div><div class="t" style="left:69px;top:191.0px;font-size:9px;color:#444;font-family:'Liberation Serif',serif">I</div><div class="ln" style="top:1.0px">1</div><div class="cl" style="top:1.0px"><span class="cm">(*<i style="width:16.86px">第</i>1<i style="width:33.72px">功能</i> <i style="width:67.44px">仿真功能</i>*)</span></div><div class="ln" style="top:19.6px">2</div><div class="cl" style="top:19.6px"><span class="cm">(*<i style="width:118.02px">仿真为什么必须</i>*)</span></div><div class="ln" style="top:38.2px">3</div><div class="cl" style="top:38.2px"><span class="cm">(*<i style="width:202.32px">调试设备必须要通电才调试</i>?*)</span></div><div class="ln" style="top:56.8px">4</div><div class="cl" style="top:56.8px"><span class="cm">(*<i style="width:269.76px">不通电通过仿真就能提前测试好流程</i>?*)</span></div><div class="ln" style="top:75.4px">5</div><div class="cl" style="top:75.4px"><span class="cm">(*<i style="width:118.02px">卡主我们的就是</i>X<i style="width:16.86px">点</i>*)</span></div><div class="ln" style="top:94.0px">6</div><div class="cl" style="top:94.0px"><span class="cm">(*X<i style="width:219.18px">点必须通过外部信号才能给到</i>PLC*)</span></div><div class="ln" style="top:112.6px">7</div><div class="cl" style="top:112.6px"><span class="cm">(*<i style="width:151.74px">仿真效果来让我们的</i>X<i style="width:84.30px">点模拟到达</i>?*)</span></div><div class="ln" style="top:131.2px">8</div><div class="ln" style="top:149.8px">9</div><div class="ln" style="top:168.4px">10</div><div class="cl" style="top:168.4px"><span class="cm">(*<i style="width:16.86px">第</i>2<i style="width:33.72px">功能</i> <i style="width:67.44px">滤波功能</i>*)</span></div><div class="ln" style="top:187.0px">11</div><div class="ln" style="top:205.6px">12</div><div class="ln" style="top:224.2px">13</div><div class="cl" style="top:224.2px"><span class="kw">IF</span> b<i style="width:50.58px">初始化</i><b>_</b>IO<i style="width:33.72px">映射</i> <span class="kw">THEN</span></div><div class="ln" style="top:242.8px">14</div><div class="cl" style="top:242.8px">    b<i style="width:50.58px">初始化</i><b>_</b>IO<i style="width:33.72px">映射</i><span class="op">:=</span><span class="kw">FALSE</span><span class="op">;</span></div><div class="ln" style="top:261.4px">15</div><div class="cl" style="top:261.4px">    i<i style="width:84.30px">输入点数量</i><span class="op">:=</span><span class="nu">24</span><span class="op">;</span></div><div class="ln" style="top:280.0px">16</div><div class="cl" style="top:280.0px">    i<i style="width:84.30px">输出点数量</i><span class="op">:=</span><span class="nu">13</span><span class="op">;</span></div><div class="ln" style="top:298.6px">17</div><div class="cl" style="top:298.6px"><span class="kw">END<b>_</b>IF</span><span class="op">;</span></div><div class="ln" style="top:317.2px">18</div><div class="ln" style="top:335.8px">19</div><div class="cl" style="top:335.8px"><span class="cm">(*<i style="width:67.44px">输入映射</i>*)</span></div><div class="ln" style="top:354.4px">20</div><div class="cl" style="top:354.4px">astIn<span class="br">[</span><span class="nu">0</span><span class="br">]</span>.<span class="mb">sName</span><span class="op">:=</span><span class="st">'X020 <i style="width:101.16px">底盖推料动点</i>'</span><span class="op">;</span></div><div class="ln" style="top:373.0px">21</div><div class="cl" style="top:373.0px"><span class="fb">Fb<b>_</b><i style="width:67.44px">输入仿真</i>1</span>.<span class="mb">I<b>_</b>b<i style="width:67.44px">仿真信号</i></span><span class="op">:=</span>astOp<span class="br">[</span><span class="nu">0</span><span class="br">]</span>.<span class="mb">bOp</span><span class="op">;</span></div><div class="ln" style="top:391.6px">22</div><div class="cl" style="top:391.6px"><span class="fb">Fb<b>_</b><i style="width:67.44px">输入仿真</i>1</span><span class="br">(</span><span class="pa">I<b>_</b>b<i style="width:67.44px">仿真模式</i></span><span class="op">:=</span>b<i style="width:67.44px">仿真模式</i> <span class="op">,</span><span class="pa">I<b>_</b>b<i style="width:67.44px">正常信号</i> </span><span class="op">:=</span><span class="xx">X20</span> <span class="op">,</span><span class="pa">I<b>_</b>di<i style="width:67.44px">仿真延时</i> </span><span class="op">:=</span> <span class="nu">500</span><span class="op">,</span><span class="pa">O<b>_</b>b<i style="width:67.44px">信号输出</i> </span><span class="op">=&gt;</span>astIn<span class="br">[</span><span class="nu">0</span><span class="br">])</span><span class="op">;</span></div><div class="ln" style="top:410.2px">23</div><div class="ln" style="top:428.8px">24</div><div class="cl" style="top:428.8px">astIn<span class="br">[</span><span class="nu">1</span><span class="br">]</span>.<span class="mb">sName</span><span class="op">:=</span><span class="st">'X021 <i style="width:101.16px">底盖推料原点</i>'</span><span class="op">;</span></div><div class="ln" style="top:447.4px">25</div><div class="cl" style="top:447.4px"><span class="fb">Fb<b>_</b><i style="width:67.44px">输入仿真</i>2</span>.<span class="mb">I<b>_</b>b<i style="width:67.44px">仿真信号</i></span><span class="op">:=</span><span class="kw">NOT</span> astOp<span class="br">[</span><span class="nu">0</span><span class="br">]</span>.<span class="mb">bOp</span><span class="op">;</span></div><div class="ln" style="top:466.0px">26</div><div class="cl" style="top:466.0px"><span class="fb">Fb<b>_</b><i style="width:67.44px">输入仿真</i>2</span><span class="br">(</span><span class="pa">I<b>_</b>b<i style="width:67.44px">仿真模式</i></span><span class="op">:=</span>b<i style="width:67.44px">仿真模式</i> <span class="op">,</span><span class="pa">I<b>_</b>b<i style="width:67.44px">正常信号</i> </span><span class="op">:=</span><span class="xx">X21</span> <span class="op">,</span><span class="pa">I<b>_</b>di<i style="width:67.44px">仿真延时</i> </span><span class="op">:=</span> <span class="nu">500</span><span class="op">,</span><span class="pa">O<b>_</b>b<i style="width:67.44px">信号输出</i> </span><span class="op">=&gt;</span>astIn<span class="br">[</span><span class="nu">1</span><span class="br">])</span><span class="op">;</span></div><div class="ln" style="top:484.6px">27</div><div class="a" style="left:44px;top:228.7px;width:9px;height:9px;border:1px solid #4a54a8;background:#dfe6fa"></div><div class="a" style="left:45px;top:232.5px;width:7px;height:1.5px;background:#4a54a8"></div><div class="a" style="left:48px;top:237.2px;width:1px;height:64.4px;background:#777"></div><div class="a" style="left:48px;top:301.6px;width:4px;height:1px;background:#777"></div><div class="a" style="left:860px;top:0;width:12px;height:492px;background:#f6f6f6"></div><div class="a" style="left:861px;top:10px;width:8px;height:77px;background:#c6c6c6"></div><svg class="a" style="left:861px;top:2px" width="8" height="6"><path d="M1.5 4.5L4 2L6.5 4.5" stroke="#555" fill="none" stroke-width="1"/></svg><svg class="a" style="left:861px;top:484px" width="8" height="6"><path d="M1.5 1.5L4 4L6.5 1.5" stroke="#555" fill="none" stroke-width="1"/></svg><div class="a" style="left:0;top:492px;width:872px;height:10px;background:#f6f6f6"></div><div class="a" style="left:11px;top:493px;width:720px;height:8px;background:#c6c6c6"></div><svg class="a" style="left:2px;top:493px" width="6" height="8"><path d="M4.5 1.5L2 4L4.5 6.5" stroke="#555" fill="none" stroke-width="1"/></svg><svg class="a" style="left:850px;top:493px" width="6" height="8"><path d="M1.5 1.5L4 4L1.5 6.5" stroke="#555" fill="none" stroke-width="1"/></svg></div><div class="a" style="left:125px;top:573.500px;width:874px;height:1px;background:#858585"></div><div class="a" style="left:125px;top:578px;width:7px;height:9px;border:1px solid #bdbdbd;border-top-color:#fff;border-left-color:#fff;background:#f0f0f0"></div><svg class="a" style="left:126px;top:580px" width="5" height="6"><path d="M4 .5L1 3L4 5.5Z" fill="none" stroke="#333" stroke-width=".8"/></svg><svg class="a" style="left:135px;top:573px" width="50" height="17"><path d="M0 1.500 C5.2 2 7.8 14.500 13 14.500 H45 Q47 14.500 47 12 V1.500" fill="#f0f0f0" stroke="#555" stroke-width="1"/></svg><svg class="a" style="left:183px;top:573px" width="62" height="17"><path d="M0 1.500 C2.4 2 3.6 14.500 6 14.500 H57 Q59 14.500 59 12 V1.500" fill="#f0f0f0" stroke="#555" stroke-width="1"/></svg><svg class="a" style="left:243px;top:573px" width="60" height="17"><path d="M0 1.500 C2.0 2 3.0 14.500 5 14.500 H55 Q57 14.500 57 12 V1.500" fill="#f0f0f0" stroke="#555" stroke-width="1"/></svg><svg class="a" style="left:292px;top:573px" width="68" height="17"><path d="M0 1.500 C4.4 2 6.6 14.500 11 14.500 H63 Q65 14.500 65 12 V1.500" fill="#fff" stroke="#555" stroke-width="1"/><rect x="0" y="0" width="67" height="1.600" fill="#fff"/></svg><div class="a" style="left:150px;top:577px;width:8px;height:8px;border:1px solid #4aa0d8;background:#e8f4fc"></div><div class="a" style="left:151px;top:578px;width:3px;height:3px;background:#58b0e0"></div><div class="t" style="left:160.5px;top:577.500px;font-size:7.5px;color:#222;">MAIN</div><div class="a" style="left:189px;top:577px;width:8px;height:8px;border:1px solid #4aa0d8;background:#e8f4fc"></div><div class="a" style="left:190px;top:578px;width:3px;height:3px;background:#58b0e0"></div><div class="t" style="left:198.0px;top:577.500px;font-size:7.5px;color:#222;">Fb_仿真输入</div><div class="a" style="left:247px;top:577px;width:8px;height:8px;border:1px solid #4aa0d8;background:#e8f4fc"></div><div class="a" style="left:248px;top:578px;width:3px;height:3px;background:#58b0e0"></div><div class="t" style="left:258.0px;top:577.500px;font-size:7.5px;color:#222;">SBR_IO显示</div><div class="a" style="left:304px;top:577px;width:8px;height:8px;border:1px solid #4aa0d8;background:#e8f4fc"></div><div class="a" style="left:305px;top:578px;width:3px;height:3px;background:#58b0e0"></div><div class="t" style="left:316.0px;top:577.500px;font-size:7.2px;color:#222;font-weight:bold;color:#000;">SBR_IO映射</div><div class="a" style="left:977px;top:578px;width:7px;height:8px;border:1px solid #c8c8c8;background:#f4f4f4"></div><svg class="a" style="left:978px;top:579px" width="5" height="6"><path d="M1 .5L4 3L1 5.5Z" fill="none" stroke="#333" stroke-width=".8"/></svg><div class="a" style="left:986px;top:578px;width:8px;height:8px;border:1px solid #c8c8c8;background:#f4f4f4"></div><svg class="a" style="left:987px;top:579px" width="6" height="6"><path d="M1 1L5 5M5 1L1 5" stroke="#222" stroke-width="1"/></svg><div class="t" style="left:1005px;top:70px;font-size:7.4px;color:#222">工具箱</div><svg class="a" style="left:1134px;top:72px" width="5" height="6"><path d="M1.500 .5H3.500M1.500 .5V3H3.500V.5M.5 3.200H4.500M2.500 3.200V5.500" stroke="#333" stroke-width=".8" fill="none"/></svg><svg class="a" style="left:1142px;top:71px" width="7" height="7"><path d="M1.500 1.500L6 6M6 1.500L1.500 6" stroke="#222" stroke-width="1.200"/></svg><div class="a" style="left:1003px;top:83px;width:120px;height:13px;background:#fff;border:1px solid #8a8a8a"></div><svg class="a" style="left:1113px;top:87px" width="7" height="5"><path d="M1 1L3.5 3.5L6 1" stroke="#666" fill="none" stroke-width="1"/></svg><div class="a" style="left:1125px;top:83px;width:25px;height:13px;background:#e2e2e2;border:1px solid #c4c4c4"></div><div class="t" style="left:1130px;top:86px;font-size:7.4px;color:#222">搜索</div><div class="a" style="left:1003px;top:100px;width:148px;height:444px;background:#fff;border:1px solid #cfcfcf"></div><div class="a" style="left:1003px;top:546px;width:148px;height:43px;background:#f2f2f2;border:1px solid #d4d4d4"></div><div class="t" style="left:1006px;top:550px;font-size:6.6px;color:#555">显示选中信息!</div><div class="a" style="left:1008.5px;top:103.8px;width:5px;height:5px;border:1px solid #c6c6c6;background:#fff"></div><div class="a" style="left:1009.5px;top:105.8px;width:3px;height:1px;background:#8a8a8a"></div><div class="t" style="left:1017.8px;top:101.6px;font-size:6.8px;line-height:9px;color:#2c2c2c">EtherCAT Devices</div><div class="a" style="left:1020.0px;top:113.4px;width:5px;height:5px;border:1px solid #c6c6c6;background:#fff"></div><div class="a" style="left:1021.0px;top:115.4px;width:3px;height:1px;background:#8a8a8a"></div><div class="a" style="left:1022.0px;top:114.4px;width:1px;height:3px;background:#8a8a8a"></div><div class="t" style="left:1029.4px;top:111.2px;font-size:6.8px;line-height:9px;color:#2c2c2c">Inovance Devices</div><div class="a" style="left:1020.0px;top:123.0px;width:5px;height:5px;border:1px solid #c6c6c6;background:#fff"></div><div class="a" style="left:1021.0px;top:125.0px;width:3px;height:1px;background:#8a8a8a"></div><div class="a" style="left:1022.0px;top:124.0px;width:1px;height:3px;background:#8a8a8a"></div><div class="t" style="left:1029.4px;top:120.8px;font-size:6.8px;line-height:9px;color:#2c2c2c">Other Devices</div><div class="a" style="left:1008.5px;top:132.6px;width:5px;height:5px;border:1px solid #c6c6c6;background:#fff"></div><div class="a" style="left:1009.5px;top:134.6px;width:3px;height:1px;background:#8a8a8a"></div><div class="t" style="left:1017.8px;top:130.4px;font-size:7.1px;line-height:9px;color:#2c2c2c">扩展模块</div><div class="a" style="left:1020.0px;top:142.2px;width:5px;height:5px;border:1px solid #c6c6c6;background:#fff"></div><div class="a" style="left:1021.0px;top:144.2px;width:3px;height:1px;background:#8a8a8a"></div><div class="a" style="left:1022.0px;top:143.2px;width:1px;height:3px;background:#8a8a8a"></div><div class="t" style="left:1029.4px;top:140.0px;font-size:7.1px;line-height:9px;color:#2c2c2c">本地模块</div><div class="a" style="left:1020.0px;top:151.8px;width:5px;height:5px;border:1px solid #c6c6c6;background:#fff"></div><div class="a" style="left:1021.0px;top:153.8px;width:3px;height:1px;background:#8a8a8a"></div><div class="a" style="left:1022.0px;top:152.8px;width:1px;height:3px;background:#8a8a8a"></div><div class="t" style="left:1029.4px;top:149.6px;font-size:7.1px;line-height:9px;color:#2c2c2c">扩展卡</div><div class="a" style="left:1008.5px;top:161.4px;width:5px;height:5px;border:1px solid #c6c6c6;background:#fff"></div><div class="a" style="left:1009.5px;top:163.4px;width:3px;height:1px;background:#8a8a8a"></div><div class="t" style="left:1017.8px;top:159.2px;font-size:6.8px;line-height:9px;color:#2c2c2c">EtherNet/IP Devices</div><div class="a" style="left:1020.0px;top:171.0px;width:5px;height:5px;border:1px solid #c6c6c6;background:#fff"></div><div class="a" style="left:1021.0px;top:173.0px;width:3px;height:1px;background:#8a8a8a"></div><div class="a" style="left:1022.0px;top:172.0px;width:1px;height:3px;background:#8a8a8a"></div><div class="t" style="left:1029.4px;top:168.8px;font-size:6.8px;line-height:9px;color:#2c2c2c">Inovance Devices</div><div class="a" style="left:1020.0px;top:180.6px;width:5px;height:5px;border:1px solid #c6c6c6;background:#fff"></div><div class="a" style="left:1021.0px;top:182.6px;width:3px;height:1px;background:#8a8a8a"></div><div class="a" style="left:1022.0px;top:181.6px;width:1px;height:3px;background:#8a8a8a"></div><div class="t" style="left:1029.4px;top:178.4px;font-size:6.8px;line-height:9px;color:#2c2c2c">Other Devices</div><div class="a" style="left:1008.5px;top:190.2px;width:5px;height:5px;border:1px solid #c6c6c6;background:#fff"></div><div class="a" style="left:1009.5px;top:192.2px;width:3px;height:1px;background:#8a8a8a"></div><div class="t" style="left:1017.8px;top:188.0px;font-size:7.1px;line-height:9px;color:#2c2c2c">指令集</div><div class="a" style="left:1020.0px;top:199.8px;width:5px;height:5px;border:1px solid #c6c6c6;background:#fff"></div><div class="a" style="left:1021.0px;top:201.8px;width:3px;height:1px;background:#8a8a8a"></div><div class="a" style="left:1022.0px;top:200.8px;width:1px;height:3px;background:#8a8a8a"></div><div class="t" style="left:1029.4px;top:197.6px;font-size:7.1px;line-height:9px;color:#2c2c2c">程序逻辑指令</div><div class="a" style="left:1020.0px;top:209.4px;width:5px;height:5px;border:1px solid #c6c6c6;background:#fff"></div><div class="a" style="left:1021.0px;top:211.4px;width:3px;height:1px;background:#8a8a8a"></div><div class="a" style="left:1022.0px;top:210.4px;width:1px;height:3px;background:#8a8a8a"></div><div class="t" style="left:1029.4px;top:207.2px;font-size:7.1px;line-height:9px;color:#2c2c2c">流程控制指令</div><div class="a" style="left:1020.0px;top:219.0px;width:5px;height:5px;border:1px solid #c6c6c6;background:#fff"></div><div class="a" style="left:1021.0px;top:221.0px;width:3px;height:1px;background:#8a8a8a"></div><div class="a" style="left:1022.0px;top:220.0px;width:1px;height:3px;background:#8a8a8a"></div><div class="t" style="left:1029.4px;top:216.8px;font-size:7.1px;line-height:9px;color:#2c2c2c">数据运算指令</div><div class="a" style="left:1020.0px;top:228.6px;width:5px;height:5px;border:1px solid #c6c6c6;background:#fff"></div><div class="a" style="left:1021.0px;top:230.6px;width:3px;height:1px;background:#8a8a8a"></div><div class="a" style="left:1022.0px;top:229.6px;width:1px;height:3px;background:#8a8a8a"></div><div class="t" style="left:1029.4px;top:226.4px;font-size:7.1px;line-height:9px;color:#2c2c2c">数据处理指令</div><div class="a" style="left:1020.0px;top:238.2px;width:5px;height:5px;border:1px solid #c6c6c6;background:#fff"></div><div class="a" style="left:1021.0px;top:240.2px;width:3px;height:1px;background:#8a8a8a"></div><div class="a" style="left:1022.0px;top:239.2px;width:1px;height:3px;background:#8a8a8a"></div><div class="t" style="left:1029.4px;top:236.0px;font-size:7.1px;line-height:9px;color:#2c2c2c">选择</div><div class="a" style="left:1020.0px;top:247.8px;width:5px;height:5px;border:1px solid #c6c6c6;background:#fff"></div><div class="a" style="left:1021.0px;top:249.8px;width:3px;height:1px;background:#8a8a8a"></div><div class="a" style="left:1022.0px;top:248.8px;width:1px;height:3px;background:#8a8a8a"></div><div class="t" style="left:1029.4px;top:245.6px;font-size:6.8px;line-height:9px;color:#2c2c2c">MC轴控(EtherCAT&amp;脉冲输出)</div><div class="a" style="left:1020.0px;top:257.4px;width:5px;height:5px;border:1px solid #c6c6c6;background:#fff"></div><div class="a" style="left:1021.0px;top:259.4px;width:3px;height:1px;background:#8a8a8a"></div><div class="a" style="left:1022.0px;top:258.4px;width:1px;height:3px;background:#8a8a8a"></div><div class="t" style="left:1029.4px;top:255.2px;font-size:6.8px;line-height:9px;color:#2c2c2c">HC轴控(脉冲输入)</div><div class="a" style="left:1020.0px;top:267.0px;width:5px;height:5px;border:1px solid #c6c6c6;background:#fff"></div><div class="a" style="left:1021.0px;top:269.0px;width:3px;height:1px;background:#8a8a8a"></div><div class="a" style="left:1022.0px;top:268.0px;width:1px;height:3px;background:#8a8a8a"></div><div class="t" style="left:1029.4px;top:264.8px;font-size:7.1px;line-height:9px;color:#2c2c2c">定时器指令</div><div class="a" style="left:1020.0px;top:276.6px;width:5px;height:5px;border:1px solid #c6c6c6;background:#fff"></div><div class="a" style="left:1021.0px;top:278.6px;width:3px;height:1px;background:#8a8a8a"></div><div class="a" style="left:1022.0px;top:277.6px;width:1px;height:3px;background:#8a8a8a"></div><div class="t" style="left:1029.4px;top:274.4px;font-size:7.1px;line-height:9px;color:#2c2c2c">通讯指令</div><div class="a" style="left:1008.5px;top:286.2px;width:5px;height:5px;border:1px solid #c6c6c6;background:#fff"></div><div class="a" style="left:1009.5px;top:288.2px;width:3px;height:1px;background:#8a8a8a"></div><div class="a" style="left:1010.5px;top:287.2px;width:1px;height:3px;background:#8a8a8a"></div><div class="t" style="left:1017.8px;top:284.0px;font-size:6.8px;line-height:9px;color:#2c2c2c">FB</div><div class="a" style="left:1011.0px;top:298.3px;width:5px;height:1px;background:#c4c4c4"></div><div class="t" style="left:1017.8px;top:293.6px;font-size:6.8px;line-height:9px;color:#2c2c2c">FC</div><div class="a" style="left:1008.5px;top:305.4px;width:5px;height:5px;border:1px solid #c6c6c6;background:#fff"></div><div class="a" style="left:1009.5px;top:307.4px;width:3px;height:1px;background:#8a8a8a"></div><div class="a" style="left:1010.5px;top:306.4px;width:1px;height:3px;background:#8a8a8a"></div><div class="t" style="left:1017.8px;top:303.2px;font-size:7.1px;line-height:9px;color:#2c2c2c">库</div><div class="a" style="left:1011px;top:110px;width:1px;height:198px;background:#d4d4d4"></div><div class="a" style="left:1132px;top:379px;width:20px;height:107px;background:#b9b9b9;border-radius:3px 0 0 3px"></div><div class="a" style="left:1138px;top:385px;width:7px;height:7px;background:#1db080;border-radius:4px"></div><div class="a" style="left:1138.500px;top:410px;width:6.500px;height:6px;background:#c4d43c;border-radius:1px"></div><div class="a" style="left:1139px;top:416px;width:5.500px;height:4px;background:#58c0a8"></div><div class="t" style="left:1136.500px;top:429.500px;font-size:6.800px;font-weight:bold;color:#f6f6f6">1.7</div><div class="t" style="left:1136.500px;top:446px;font-size:6.800px;font-weight:bold;color:#f6f6f6">0.7</div><div class="a" style="left:1136px;top:438px;width:2px;height:2px;background:#20b080"></div><div class="a" style="left:1136px;top:454px;width:2px;height:2px;background:#20b080"></div><div class="t" style="left:1137px;top:470px;font-size:7px;font-weight:bold;color:#e0e0e0">&gt;&gt;</div><div class="t" style="left:2px;top:596px;font-size:7.4px;color:#222">信息输出窗口</div><svg class="a" style="left:1134px;top:598px" width="5" height="6"><path d="M1.500 .5H3.500M1.500 .5V3H3.500V.5M.5 3.200H4.500M2.500 3.200V5.500" stroke="#333" stroke-width=".8" fill="none"/></svg><svg class="a" style="left:1142px;top:597px" width="7" height="7"><path d="M1.500 1.500L6 6M6 1.500L1.500 6" stroke="#222" stroke-width="1.200"/></svg><div class="a" style="left:0;top:609px;width:1151px;height:61px;background:#fff;border:1px solid #828282;border-right-color:#d0d0d0"></div><div class="a" style="left:1144px;top:610px;width:6px;height:59px;background:#f4f4f4"></div><svg class="a" style="left:1144px;top:612px" width="6" height="5"><path d="M1 3.5L3 1.5L5 3.5" stroke="#bbb" fill="none" stroke-width="1"/></svg><svg class="a" style="left:1144px;top:662px" width="6" height="5"><path d="M1 1.5L3 3.5L5 1.5" stroke="#bbb" fill="none" stroke-width="1"/></svg><div class="a" style="left:2.0px;top:671px;width:8px;height:9px;border:1px solid #b8b8b8;border-top-color:#fff;border-left-color:#fff;background:#f0f0f0"></div><div class="a" style="left:11.6px;top:671px;width:8px;height:9px;border:1px solid #b8b8b8;border-top-color:#fff;border-left-color:#fff;background:#f0f0f0"></div><div class="a" style="left:21.2px;top:671px;width:8px;height:9px;border:1px solid #b8b8b8;border-top-color:#fff;border-left-color:#fff;background:#f0f0f0"></div><div class="a" style="left:30.8px;top:671px;width:8px;height:9px;border:1px solid #b8b8b8;border-top-color:#fff;border-left-color:#fff;background:#f0f0f0"></div><svg class="a" style="left:2px;top:671px" width="40" height="9"><path d="M2.5 2.5V6.5M6 2.5L3.5 4.5L6 6.5Z M15.500 2.500L13 4.500L15.500 6.500Z M22.5 2.500L25 4.500L22.5 6.500Z M31.5 2.5L34 4.5L31.5 6.5Z M35 2.500V6.500" fill="#222" stroke="#222" stroke-width=".7"/></svg><svg class="a" style="left:128.5px;top:670px" width="42" height="12"><path d="M.5 0 L5.5 10.500 H36.0 L41.0 0" fill="#f0f0f0" stroke="#444" stroke-width=".9"/></svg><svg class="a" style="left:99.0px;top:670px" width="34" height="12"><path d="M.5 0 L5.5 10.500 H28.0 L33.0 0" fill="#f0f0f0" stroke="#444" stroke-width=".9"/></svg><svg class="a" style="left:72.5px;top:670px" width="32" height="12"><path d="M.5 0 L5.5 10.500 H25.5 L30.5 0" fill="#f0f0f0" stroke="#444" stroke-width=".9"/></svg><svg class="a" style="left:39.5px;top:670px" width="39" height="12"><path d="M.5 0 L6.5 10.500 H31.5 L38.0 0" fill="#fff" stroke="#444" stroke-width=".9"/><rect x="1" y="0" width="36.5" height="1" fill="#fff"/></svg><div class="t" style="left:50.500px;top:672.500px;font-size:6.600px;font-weight:bold;color:#000;letter-spacing:.5px">编译</div><div class="t" style="left:82.500px;top:672.800px;font-size:6.100px;color:#333">通讯</div><div class="t" style="left:109px;top:672.800px;font-size:6.100px;color:#333">转换</div><div class="t" style="left:135.800px;top:672.800px;font-size:6.200px;color:#333">查找结果</div><div class="a" style="left:40px;top:669.5px;width:1111px;height:1px;background:#6a6a6a"></div><div class="a" style="left:41px;top:669.500px;width:36px;height:1.500px;background:#fff"></div><div class="a" style="left:583px;top:671px;width:560px;height:10px;background:#f4f4f4;border-left:2px solid #c0c0c0"></div><div class="a" style="left:596px;top:672px;width:162px;height:8px;background:#c4c4c4"></div><svg class="a" style="left:588px;top:672px" width="6" height="8"><path d="M4.5 1.5L2 4L4.5 6.5" stroke="#444" fill="none" stroke-width="1"/></svg><svg class="a" style="left:1132px;top:672px" width="6" height="8"><path d="M1.5 1.5L4 4L1.5 6.500" stroke="#444" fill="none" stroke-width="1"/></svg><div class="a" style="left:0;top:682px;width:1152px;height:14px;background:#f0f0f0;border-top:1px solid #e0e0e0"></div><div class="t" style="left:2px;top:686px;font-size:7.2px;color:#222">就绪</div><div class="a" style="left:1041px;top:681px;width:111px;height:15px;background:#fdfdfd"></div><div class="a" style="left:1046px;top:678.500px;width:16px;height:16.500px;background:#f06a1c;border-radius:3px;transform:skewX(-8deg)"></div><div class="t" style="left:1049px;top:679px;font-size:15.500px;font-weight:bold;font-style:italic;color:#fff">S</div><div class="t" style="left:1066px;top:683.5px;font-size:10px;font-weight:bold;color:#1a78d8">中</div><div class="t" style="left:1082px;top:683px;font-size:9px;font-weight:bold;color:#1a78d8">&#176;,</div><div class="a" style="left:1097px;top:684px;width:4px;height:7px;background:#1a78d8;border-radius:2px"></div><div class="a" style="left:1095.500px;top:688px;width:7px;height:4px;border:1px solid #1a78d8;border-top:none;border-radius:0 0 4px 4px"></div><div class="a" style="left:1098.500px;top:692px;width:1px;height:2px;background:#1a78d8"></div><div class="a" style="left:1109px;top:685px;width:10px;height:8px;border:1.5px solid #1a78d8;border-radius:1px"></div><div class="a" style="left:1111px;top:689px;width:6px;height:1px;background:#1a78d8"></div><svg class="a" style="left:1123px;top:684px" width="11" height="10"><path d="M1 2L4 0.5Q5.5 2 7 .5L10 2L9 4.500L8 4V9.500H3V4L2 4.500Z" fill="#8a58c8"/></svg><div class="a" style="left:1138px;top:684px;width:4px;height:4px;background:#1a78d8;border-radius:1px"></div><div class="a" style="left:1143px;top:684px;width:4px;height:4px;background:#1a78d8;border-radius:1px"></div><div class="a" style="left:1138px;top:689px;width:4px;height:4px;background:#1a78d8;border-radius:1px"></div><div class="a" style="left:1143px;top:689px;width:4px;height:4px;background:#1a78d8;border-radius:1px"></div></div><div class="a" style="left:64px;top:696px;width:1152px;height:24px;background:#1d2c38"></div><div class="a" style="left:73.0px;top:703.0px;width:4.8px;height:4.8px;background:#fff"></div><div class="a" style="left:78.5px;top:703.0px;width:4.8px;height:4.8px;background:#fff"></div><div class="a" style="left:73.0px;top:708.5px;width:4.8px;height:4.8px;background:#fff"></div><div class="a" style="left:78.5px;top:708.5px;width:4.8px;height:4.8px;background:#fff"></div><div class="t" style="left:102.500px;top:697.500px;font-size:19px;font-weight:bold;font-style:italic;color:#48b4f0;font-family:'Liberation Sans',sans-serif">e</div><div class="a" style="left:101px;top:703px;width:17px;height:8px;border-top:1.500px solid #f0d050;border-radius:50%;transform:rotate(-25deg)"></div><div class="a" style="left:132px;top:703px;width:13px;height:10px;background:#f4c430;border-radius:1px"></div><div class="a" style="left:132px;top:702px;width:6px;height:3px;background:#e0a820"></div><div class="a" style="left:134px;top:708px;width:9px;height:4px;background:#5aa8e0"></div><div class="a" style="left:160px;top:702px;width:11px;height:10px;background:#2cc050;border-radius:6px"></div><div class="a" style="left:167px;top:707px;width:9px;height:8px;background:#d8f0dc;border-radius:5px"></div><div class="a" style="left:190px;top:702px;width:14px;height:13px;background:#1c1c1c;border:1px solid #e8e8e8;border-radius:2px"></div><svg class="a" style="left:191px;top:703px" width="12" height="11"><path d="M1 8L8 2L11 3L5 6L9 6" stroke="#fff" stroke-width="1.3" fill="none"/><path d="M3 9.500H9" stroke="#ccc" stroke-width="1"/></svg><div class="a" style="left:219px;top:701px;width:15px;height:15px;background:linear-gradient(135deg,#f060a0,#a060e0);border-radius:3px"></div><div class="a" style="left:223px;top:706px;width:7px;height:7px;border:1.5px solid #fff;border-radius:4px;background:#4aa0e0"></div><div class="a" style="left:241px;top:696px;width:29px;height:24px;background:#475660"></div><div class="a" style="left:248px;top:701px;width:15px;height:14px;background:#2a9ae0;border-radius:2px"></div><div class="a" style="left:250px;top:704px;width:11px;height:1px;background:#c8ecff"></div><div class="a" style="left:250px;top:708px;width:11px;height:1px;background:#c8ecff"></div><div class="a" style="left:255px;top:702px;width:1px;height:9px;background:#c8ecff"></div><div class="a" style="left:251px;top:712px;width:9px;height:1.5px;background:#e8f8ff"></div><div class="a" style="left:278px;top:701px;width:14px;height:14px;background:#1a6ae0;border-radius:2px"></div><svg class="a" style="left:279px;top:704px" width="12" height="8"><path d="M0 7L3.5 2L6 5L8.500 1L12 7Z" fill="#fff"/></svg><div class="a" style="left:307px;top:701px;width:15px;height:15px;background:#f08a1c;border-radius:2px"></div><div class="a" style="left:313px;top:704px;width:3px;height:3px;background:#fff"></div><div class="a" style="left:310px;top:710px;width:3px;height:3px;background:#fff"></div><div class="a" style="left:316px;top:710px;width:3px;height:3px;background:#fff"></div><div class="a" style="left:314px;top:706px;width:1px;height:4px;background:#fff"></div><div class="a" style="left:126px;top:718.5px;width:25px;height:1.5px;background:#86c4ec"></div><div class="a" style="left:185px;top:718.5px;width:24px;height:1.5px;background:#86c4ec"></div><div class="a" style="left:214px;top:718.5px;width:25px;height:1.5px;background:#86c4ec"></div><div class="a" style="left:241px;top:718.5px;width:29px;height:1.5px;background:#86c4ec"></div><div class="a" style="left:273px;top:718.5px;width:24px;height:1.5px;background:#86c4ec"></div><div class="a" style="left:302px;top:718.5px;width:25px;height:1.5px;background:#86c4ec"></div><div class="a" style="left:912px;top:703px;width:9px;height:10px;background:#0c0c10;border-radius:2px"></div><div class="t" style="left:913.500px;top:703.500px;font-size:8.500px;color:#fff;font-weight:bold;font-family:'DejaVu Sans',sans-serif">&#9834;</div><div class="a" style="left:926px;top:703px;width:9.500px;height:10px;background:#d8a8d0;border-radius:2px"></div><div class="a" style="left:928px;top:704px;width:5.500px;height:4px;background:#f4ecf4;border-radius:1px"></div><div class="a" style="left:929.500px;top:709px;width:2.500px;height:3px;background:#f8f0f8"></div><svg class="a" style="left:940px;top:702.500px" width="10" height="11"><path d="M5 .5L9.500 2V5.500Q9 9 5 10.500Q1 9 .5 5.500V2Z" fill="#3858e8" stroke="#e8ecff" stroke-width="1"/><path d="M3 5.500L4.500 7L7 4" stroke="#fff" stroke-width="1" fill="none"/></svg><div class="a" style="left:954px;top:703px;width:10px;height:10px;background:#2a3a58"></div><div class="a" style="left:954px;top:703px;width:4px;height:4px;background:#e84848"></div><div class="a" style="left:959px;top:704px;width:5px;height:2px;background:#f0f0f0"></div><div class="a" style="left:956px;top:708px;width:8px;height:4px;background:#48a8e8"></div><div class="a" style="left:954px;top:710px;width:3px;height:3px;background:#e03030"></div><div class="a" style="left:968px;top:703px;width:10px;height:10px;background:#e84a4a"></div><div class="a" style="left:970px;top:705px;width:6px;height:5px;border:1px solid #fbdcdc;border-bottom:none"></div><div class="a" style="left:983px;top:703px;width:10px;height:10px;background:#1a78e8;border-radius:1px"></div><svg class="a" style="left:984px;top:705px" width="8" height="6"><path d="M0 5.500L2.500 1.500L4 3.500L5.500 1L8 5.500Z" fill="#fff"/></svg><div class="a" style="left:997px;top:704.500px;width:10.500px;height:7.500px;background:#f4f4f4;border-radius:4px"></div><div class="a" style="left:999.500px;top:706px;width:6px;height:5px;background:#d82828;border-radius:3px"></div><div class="a" style="left:1011.500px;top:703.500px;width:10px;height:9px;background:#f4f4f4;border-radius:1px"></div><svg class="a" style="left:1012px;top:704px" width="9" height="8"><path d="M.5 7L6 2L8.500 2.500L4 5.500H8" stroke="#1a1a1a" stroke-width="1.300" fill="none"/></svg><div class="a" style="left:1026px;top:703px;width:10px;height:10px;background:#1428b4"></div><div class="a" style="left:1030px;top:705px;width:4px;height:4px;background:#2a48e0"></div><div class="a" style="left:1042px;top:701.500px;width:6px;height:9px;background:#d4dadd;border-radius:3px"></div><div class="a" style="left:1044.500px;top:710.500px;width:1px;height:3px;background:#c8d0d4"></div><div class="a" style="left:1055px;top:705px;width:10px;height:6px;border:1px solid #e8e8e8;border-radius:1px"></div><div class="a" style="left:1056.500px;top:706.500px;width:5px;height:3px;background:#e8e8e8"></div><svg class="a" style="left:1068px;top:703px" width="11" height="10"><path d="M1 3.500H3L6 1V9L3 6.500H1Z" fill="#e8e8e8"/><path d="M7.500 3Q9 5 7.500 7M9 2Q11 5 9 8" stroke="#b8c0c4" fill="none" stroke-width=".8"/></svg><svg class="a" style="left:1084px;top:703px" width="11" height="10"><path d="M1 9L10 1V9Z" fill="#5a6a74"/><path d="M1 9L6 4.500V9Z" fill="#c8d0d4"/></svg><div class="a" style="left:1098px;top:702px;width:10px;height:10px;background:#c8d0d4;border-radius:5px"></div><div class="a" style="left:1101px;top:704px;width:4px;height:4px;background:#4a5a64;border-radius:2px"></div><div class="t" style="left:1112px;top:703px;font-size:9px;color:#f0f0f0">中</div><div class="a" style="left:1129px;top:702px;width:10px;height:10px;background:#f06a1c;border-radius:2px"></div><div class="t" style="left:1131px;top:702px;font-size:9.500px;font-weight:bold;font-style:italic;color:#fff">S</div><div class="t" style="left:1169.500px;top:698px;font-size:7.8px;color:#f0f0f0">22:09</div><div class="t" style="left:1149px;top:709.500px;font-size:7.8px;color:#f0f0f0">2024/11/7</div><div class="a" style="left:1213px;top:697px;width:1px;height:23px;background:#5a6a74"></div><div class="a" style="left:1216px;top:0;width:64px;height:720px;background:#000"></div><div class="a" style="left:1188px;top:704px;width:92px;height:16px;background:#000"></div><div class="t" style="left:1193.500px;top:706.500px;font-size:8.600px;color:#f4f4f4;transform-origin:0 50%;transform:scaleY(1.1);font-family:'Liberation Sans',sans-serif">2024/11/07 22:09:59</div><div class="a" style="left:1216px;top:0;width:64px;height:80px;overflow:hidden"><div class="t" style="left:-6.500px;top:22.500px;font-size:48px;font-weight:bold;color:#c9c9c9;font-family:'Liberation Sans',sans-serif;transform-origin:0 100%;transform:scaleY(.62)">b</div><div class="t" style="left:17.500px;top:33px;font-size:36px;font-weight:bold;color:#c9c9c9;font-family:'Liberation Sans',sans-serif;transform-origin:0 100%;transform:scaleY(1.24) rotate(-3deg);letter-spacing:-2.800px">ili</div></div><div class="t" style="left:951px;top:36px;font-size:19px;font-weight:bold;color:#f9f9f9;letter-spacing:6px;font-family:'Noto Sans CJK SC',sans-serif;filter:blur(.6px)">全工工工工工工工</div><div class="a" style="left:975px;top:54px;width:176px;height:1.5px;background:#fafafa"></div></body></html>
